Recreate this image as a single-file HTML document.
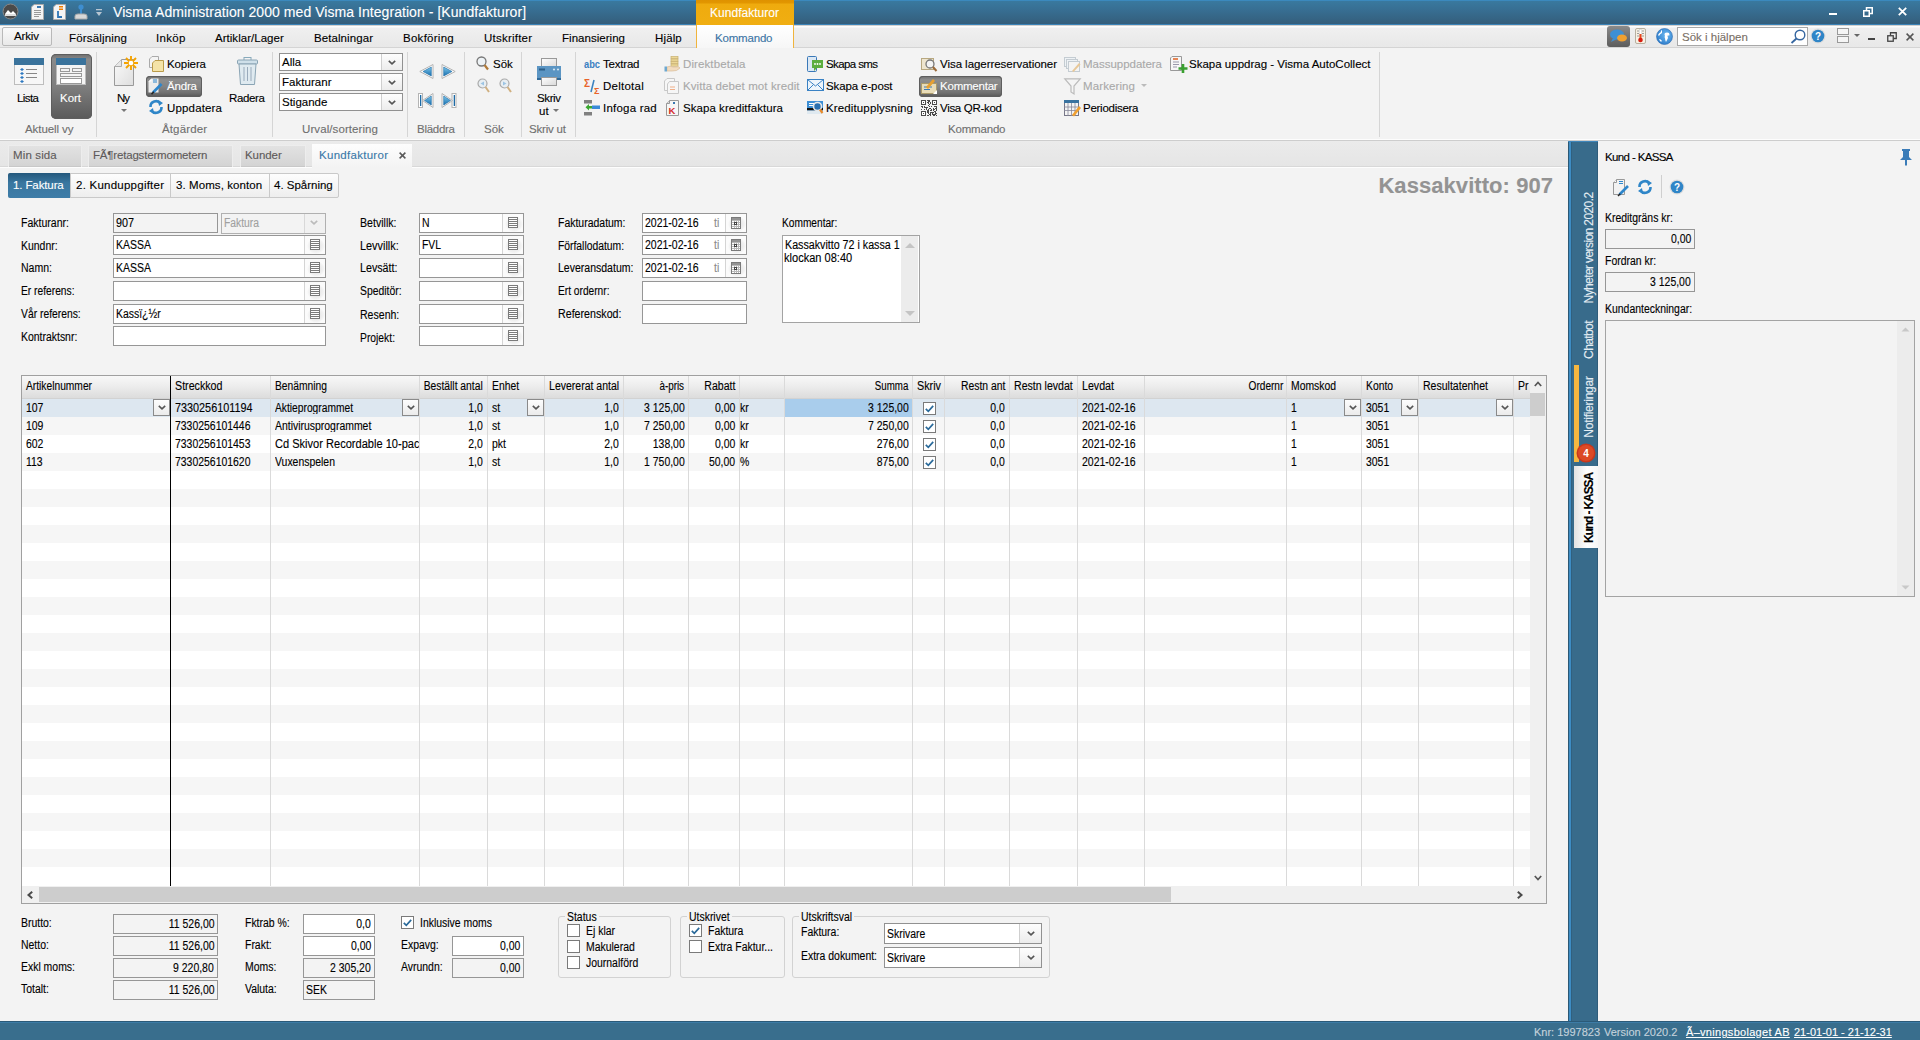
<!DOCTYPE html><html><head><meta charset="utf-8"><style>
*{box-sizing:border-box;margin:0;padding:0}
html,body{width:1920px;height:1040px;overflow:hidden;background:#f3f3f3;font-family:"Liberation Sans",sans-serif;font-size:12px;color:#000}
.a{position:absolute;white-space:nowrap;line-height:1;-webkit-text-stroke:0.12px currentColor}
svg{position:absolute;overflow:visible}
</style></head><body>
<div class="a" style="left:0px;top:0px;width:1920px;height:26px;background:linear-gradient(#3b89bd 0,#3b89bd 1px,#39799f 1px,#376c8f 12px,#345e7b 24px,#3a82b6 24px,#3a82b6 25px)"></div>
<div class="a" style="left:0px;top:25px;width:1920px;height:1px;background:#d2d0ce"></div>
<svg style="left:2px;top:3px" width="17" height="17" viewBox="0 0 17 17"><circle cx="8.5" cy="8.5" r="7.5" fill="#4a4a4a" stroke="#888" stroke-width="1"/><path d="M3 11 L6 7 L9 10 L11 8 L14 11 Z" fill="#fff"/><rect x="3" y="11" width="11" height="2" fill="#ddd"/></svg>
<svg style="left:31px;top:4px" width="13" height="16" viewBox="0 0 13 16"><path d="M3 0.5 H12.5 V15.5 H0.5 V3 Z" fill="#f4f4f4" stroke="#aaa"/><rect x="6" y="2" width="4" height="2" fill="#3b79b0"/><path d="M3 6.5h7M3 8.5h7M3 10.5h7M3 12.5h5" stroke="#999" stroke-width="1"/></svg>
<svg style="left:53px;top:4px" width="13" height="16" viewBox="0 0 13 16"><path d="M3 0.5 H12.5 V15.5 H0.5 V3 Z" fill="#f4f4f4" stroke="#aaa"/><rect x="6" y="2" width="4" height="1.5" fill="#f07d00"/><rect x="6" y="4.5" width="4" height="1.5" fill="#f07d00"/><path d="M5 7 V13 H9" stroke="#2e75b6" stroke-width="1.8" fill="none"/></svg>
<svg style="left:74px;top:4px" width="15" height="16" viewBox="0 0 15 16"><circle cx="7" cy="3" r="2.6" fill="#3e8ed0"/><rect x="6" y="4" width="2" height="7" fill="#3e8ed0"/><path d="M1 12 Q1 10 4 10 H10 Q13 10 13 12 V15 H1Z" fill="#d8d8d8" stroke="#aaa"/></svg>
<svg style="left:96px;top:9px" width="6" height="8" viewBox="0 0 6 8"><rect x="0" y="0" width="6" height="1.3" fill="#b8c6d2"/><path d="M0 3 H6 L3 7Z" fill="#b8c6d2"/></svg>
<div class="a" style="left:113px;top:5px;font-size:14px;color:#fff;font-weight:normal;letter-spacing:0.055px;x-ls:0.05px">Visma Administration 2000 med Visma Integration - [Kundfakturor]</div>
<div class="a" style="left:696px;top:0px;width:98px;height:26px;background:linear-gradient(#df9200 0,#e29600 3px,#efab0e 4px,#f0ae12 25px)"></div>
<div class="a" style="left:710px;top:7px;font-size:12px;color:#fff;font-weight:normal;letter-spacing:0.027px;">Kundfakturor</div>
<div class="a" style="left:1829px;top:13px;width:8px;height:2px;background:#fff"></div>
<svg style="left:1863px;top:7px" width="10" height="10" viewBox="0 0 10 10"><rect x="0.75" y="3.75" width="5.5" height="5.5" fill="none" stroke="#fff" stroke-width="1.5"/><path d="M3.5 3.5 V0.75 H9.25 V6.5 H6.5" fill="none" stroke="#fff" stroke-width="1.5"/></svg>
<svg style="left:1898px;top:7px" width="9" height="9" viewBox="0 0 9 9"><path d="M0.8 0.8 L8.2 8.2 M8.2 0.8 L0.8 8.2" stroke="#fff" stroke-width="1.8"/></svg>
<div class="a" style="left:0px;top:26px;width:1920px;height:22px;background:linear-gradient(#fdfdfd 0,#fdfdfd 1px,#f0f0f0 2px,#ececec 50%,#e8e8e8);border-bottom:1px solid #d4d4d4"></div>
<div class="a" style="left:2px;top:27px;width:50px;height:19px;background:linear-gradient(#fafafa,#e9e9e9);border:1px solid #b9b9b9;border-radius:2px"></div>
<div class="a" style="left:14px;top:31px;font-size:11.5px;color:#000;font-weight:normal;letter-spacing:-0.139px;">Arkiv</div>
<div class="a" style="left:69px;top:33px;font-size:11.5px;color:#000;font-weight:normal;letter-spacing:0.176px;">Försäljning</div>
<div class="a" style="left:156px;top:33px;font-size:11.5px;color:#000;font-weight:normal;letter-spacing:0.342px;">Inköp</div>
<div class="a" style="left:215px;top:33px;font-size:11.5px;color:#000;font-weight:normal;letter-spacing:0.028px;">Artiklar/Lager</div>
<div class="a" style="left:314px;top:33px;font-size:11.5px;color:#000;font-weight:normal;letter-spacing:0.082px;">Betalningar</div>
<div class="a" style="left:403px;top:33px;font-size:11.5px;color:#000;font-weight:normal;letter-spacing:0.271px;">Bokföring</div>
<div class="a" style="left:484px;top:33px;font-size:11.5px;color:#000;font-weight:normal;letter-spacing:0.222px;">Utskrifter</div>
<div class="a" style="left:562px;top:33px;font-size:11.5px;color:#000;font-weight:normal;letter-spacing:0.033px;">Finansiering</div>
<div class="a" style="left:655px;top:33px;font-size:11.5px;color:#000;font-weight:normal;letter-spacing:0.136px;">Hjälp</div>
<div class="a" style="left:696px;top:25px;width:98px;height:24px;background:linear-gradient(#ffffff,#f6f6f6);border-left:1px solid #f0b43c;border-right:1px solid #f0b43c"></div>
<div class="a" style="left:715px;top:33px;font-size:11.5px;color:#3b74a4;font-weight:normal;letter-spacing:-0.186px;">Kommando</div>
<div class="a" style="left:1607px;top:26px;width:23px;height:21px;background:linear-gradient(#8a8a8a,#5c5c5c);border-radius:3px"></div>
<svg style="left:1609px;top:28px" width="19" height="17" viewBox="0 0 19 17"><ellipse cx="8" cy="6.5" rx="7" ry="5" fill="#3e8fd3"/><path d="M4 10 L2 14 L8 11Z" fill="#3e8fd3"/><ellipse cx="13" cy="10" rx="5" ry="3.5" fill="#f0a030"/></svg>
<svg style="left:1635px;top:28px" width="11" height="16" viewBox="0 0 11 16"><rect x="0.5" y="0.5" width="10" height="15" rx="1.5" fill="#f7f1e4" stroke="#b8b0a0"/><path d="M2 3h2M7 3h2M2 5.5h2M7 5.5h2M2 8h2M7 8h2" stroke="#888" stroke-width="0.8"/><rect x="4.5" y="1.5" width="2" height="8" fill="#fff" stroke="#ccc" stroke-width="0.5"/><rect x="4.5" y="6" width="2" height="5" fill="#e84a1a"/><circle cx="5.5" cy="12" r="2.3" fill="#d81e10"/></svg>
<svg style="left:1656px;top:28px" width="17" height="17" viewBox="0 0 17 17"><defs><radialGradient id="ggl" cx="0.6" cy="0.4" r="0.7"><stop offset="0" stop-color="#6ab8f0"/><stop offset="1" stop-color="#2a78c8"/></radialGradient></defs><circle cx="8.5" cy="8.5" r="8" fill="url(#ggl)" stroke="#2a6ab0" stroke-width="0.6"/><path d="M6 2 Q4 3 5 4 Q3 5 2 7 L3 8 Q4 6 6 5Z M9 5 Q11 4 13 5 Q14 7 13 8 L12 7 Q11 8 12 10 Q11 12 10 14 Q9 12 9 10 Q8 9 9 8 Q8 6 9 5Z M3 11 Q5 11 6 13 Q5 14 4 13Z" fill="#fff"/></svg>
<div class="a" style="left:1677px;top:27px;width:131px;height:19px;background:#fff;border:1px solid #a8a8a8"></div>
<div class="a" style="left:1682px;top:32px;font-size:11.5px;color:#7a6f66;font-weight:normal;">Sök i hjälpen</div>
<svg style="left:1790px;top:29px" width="16" height="15" viewBox="0 0 16 15"><circle cx="10" cy="6" r="4.8" fill="none" stroke="#3566a0" stroke-width="1.4"/><path d="M6.5 9.5 L1.5 14" stroke="#3566a0" stroke-width="1.8"/></svg>
<svg style="left:1810px;top:28px" width="16" height="16" viewBox="0 0 16 16"><circle cx="8" cy="8" r="7.5" fill="#ddd"/><circle cx="8" cy="8" r="6.3" fill="#2f85c7"/><text x="8" y="12" font-size="10" font-weight="bold" text-anchor="middle" fill="#fff" font-family="Liberation Sans">?</text></svg>
<svg style="left:1837px;top:28px" width="12" height="16" viewBox="0 0 12 16"><rect x="0.5" y="0.5" width="11" height="6" fill="#f5f5f5" stroke="#999"/><rect x="0.5" y="8.5" width="11" height="6" fill="#f5f5f5" stroke="#999"/></svg>
<svg style="left:1854px;top:34px" width="6" height="4" viewBox="0 0 6 4"><path d="M0 0 H6 L3 3Z" fill="#666"/></svg>
<div class="a" style="left:1868px;top:38px;width:7px;height:2px;background:#444"></div>
<svg style="left:1887px;top:32px" width="10" height="10" viewBox="0 0 10 10"><rect x="0.75" y="3.75" width="5.5" height="5.5" fill="none" stroke="#444" stroke-width="1.3"/><path d="M3.5 3.5 V0.75 H9.25 V6.5 H6.5" fill="none" stroke="#444" stroke-width="1.3"/></svg>
<svg style="left:1906px;top:33px" width="8" height="8" viewBox="0 0 8 8"><path d="M0.6 0.6 L7.4 7.4 M7.4 0.6 L0.6 7.4" stroke="#555" stroke-width="1.5"/></svg>
<div class="a" style="left:0px;top:48px;width:1920px;height:92px;background:#f3f3f3"></div>
<div class="a" style="left:0px;top:139px;width:1920px;height:1px;background:#fdfdfd"></div>
<div class="a" style="left:0px;top:140px;width:1920px;height:1px;background:#cdcdcd"></div>
<div class="a" style="left:96px;top:52px;width:1px;height:85px;background:#d5d5d5"></div>
<div class="a" style="left:272px;top:52px;width:1px;height:85px;background:#d5d5d5"></div>
<div class="a" style="left:407px;top:52px;width:1px;height:85px;background:#d5d5d5"></div>
<div class="a" style="left:464px;top:52px;width:1px;height:85px;background:#d5d5d5"></div>
<div class="a" style="left:521px;top:52px;width:1px;height:85px;background:#d5d5d5"></div>
<div class="a" style="left:575px;top:52px;width:1px;height:85px;background:#d5d5d5"></div>
<div class="a" style="left:1379px;top:52px;width:1px;height:85px;background:#d5d5d5"></div>
<div class="a" style="left:25px;top:124px;font-size:11.5px;color:#6f6f6f;font-weight:normal;letter-spacing:-0.079px;">Aktuell vy</div>
<div class="a" style="left:162px;top:124px;font-size:11.5px;color:#6f6f6f;font-weight:normal;letter-spacing:0.128px;">Åtgärder</div>
<div class="a" style="left:302px;top:124px;font-size:11.5px;color:#6f6f6f;font-weight:normal;letter-spacing:0.088px;">Urval/sortering</div>
<div class="a" style="left:417px;top:124px;font-size:11.5px;color:#6f6f6f;font-weight:normal;letter-spacing:-0.273px;">Bläddra</div>
<div class="a" style="left:484px;top:124px;font-size:11.5px;color:#6f6f6f;font-weight:normal;">Sök</div>
<div class="a" style="left:529px;top:124px;font-size:11.5px;color:#6f6f6f;font-weight:normal;letter-spacing:-0.191px;">Skriv ut</div>
<div class="a" style="left:948px;top:124px;font-size:11.5px;color:#6f6f6f;font-weight:normal;letter-spacing:-0.186px;">Kommando</div>
<svg style="left:14px;top:58px" width="30" height="27" viewBox="0 0 30 27"><rect x="0.5" y="0.5" width="29" height="26" fill="#f7f7f7" stroke="#bdbdbd"/><rect x="0" y="0" width="30" height="7" fill="#3a739c"/><g fill="#2d78c0"><path d="M8 10l2 1.5-2 1.5-2-1.5z"/><path d="M8 14l2 1.5-2 1.5-2-1.5z"/><path d="M8 18l2 1.5-2 1.5-2-1.5z"/><path d="M8 22l2 1.5-2 1.5-2-1.5z"/></g><path d="M12 11.5h11M12 15.5h11M12 19.5h11" stroke="#888" stroke-width="1"/></svg>
<div class="a" style="left:17px;top:93px;font-size:11.5px;color:#000;font-weight:normal;letter-spacing:-0.573px;">Lista</div>
<div class="a" style="left:51px;top:54px;width:41px;height:65px;background:linear-gradient(#6c6c6c 0,#8a8a8a 8%,#7e7e7e 50%,#5a5a5a 100%);border-radius:5px;box-shadow:inset 0 0 0 1px #5e5e5e"></div>
<svg style="left:56px;top:58px" width="30" height="28" viewBox="0 0 30 28"><rect x="0.5" y="0.5" width="29" height="26" fill="#f4f4f4" stroke="#bbb"/><rect x="0" y="0" width="30" height="7" fill="#3a739c"/><rect x="4.5" y="10.5" width="9" height="3" fill="none" stroke="#999"/><rect x="16.5" y="10.5" width="9" height="3" fill="none" stroke="#999"/><rect x="4.5" y="15.5" width="21" height="3" fill="none" stroke="#999"/><rect x="4.5" y="20.5" width="21" height="5" fill="#fff" stroke="#999"/></svg>
<div class="a" style="left:60px;top:93px;font-size:11.5px;color:#fff;font-weight:normal;letter-spacing:-0.030px;">Kort</div>
<svg style="left:113px;top:56px" width="27" height="32" viewBox="0 0 27 32"><defs><linearGradient id="gny" x1="0" y1="0" x2="1" y2="1"><stop offset="0" stop-color="#fafafa"/><stop offset="1" stop-color="#dedede"/></linearGradient></defs><path d="M8.5 3.5 H20.5 V29.5 H1.5 V10.5 Z" fill="url(#gny)" stroke="#9a9a9a"/><path d="M1.5 10.5 H8.5 V3.5" fill="#e6e6e6" stroke="#aaa"/><g stroke="#f5a300" stroke-width="1.9"><path d="M18 0 V14 M11 7 H25 M13 2 L23 12 M23 2 L13 12"/></g><circle cx="18" cy="7" r="2.3" fill="#fff"/></svg>
<div class="a" style="left:117px;top:93px;font-size:11.5px;color:#000;font-weight:normal;letter-spacing:-1.055px;">Ny</div>
<svg style="left:121px;top:109px" width="6" height="4" viewBox="0 0 6 4"><path d="M0 0H6L3 3Z" fill="#777"/></svg>
<svg style="left:149px;top:56px" width="15" height="16" viewBox="0 0 15 16"><path d="M3 0.5H9.5V11.5H0.5V3Z" fill="#f4f4f4" stroke="#aaa"/><path d="M6 4.5H14.5V15.5H3.5V7Z" fill="#f4e3a8" stroke="#b99a4a"/></svg>
<div class="a" style="left:167px;top:59px;font-size:11.5px;color:#000;font-weight:normal;letter-spacing:-0.106px;">Kopiera</div>
<div class="a" style="left:146px;top:76px;width:56px;height:21px;background:linear-gradient(#6c6c6c 0,#8d8d8d 18%,#848484 50%,#707070 80%,#565656 100%);border-radius:4px;box-shadow:inset 0 0 0 1px #5e5e5e"></div>
<svg style="left:148px;top:78px" width="16" height="17" viewBox="0 0 16 17"><path d="M3.5 0.5 H10.5 V14.5 H0.5 V3.5Z" fill="#ececec"/><path d="M0.5 3.5 H3.5 V0.5Z" fill="#fff"/><path d="M5 2h4M5 4h4" stroke="#2d86cc" stroke-width="1.2"/><path d="M13.5 6 L5 14.5" stroke="#2d86cc" stroke-width="2.6"/><path d="M5.8 13.7 L3.5 16.2" stroke="#222" stroke-width="1.5"/></svg>
<div class="a" style="left:167px;top:81px;font-size:11.5px;color:#fff;font-weight:normal;letter-spacing:-0.171px;">Ändra</div>
<svg style="left:148px;top:99px" width="16" height="16" viewBox="0 0 16 16"><path d="M2.5 8 A5.5 5.5 0 0 1 12.5 4.5" fill="none" stroke="#2f86c8" stroke-width="2.6"/><path d="M13.5 8 A5.5 5.5 0 0 1 3.5 11.5" fill="none" stroke="#2f86c8" stroke-width="2.6"/><path d="M10 1 L15 4 L11 7Z M6 15 L1 12 L5 9Z" fill="#2f86c8"/></svg>
<div class="a" style="left:167px;top:103px;font-size:11.5px;color:#000;font-weight:normal;letter-spacing:0.163px;">Uppdatera</div>
<svg style="left:237px;top:57px" width="21" height="28" viewBox="0 0 21 28"><rect x="7" y="0.5" width="7" height="3" fill="none" stroke="#8ab"/><rect x="0.5" y="3" width="20" height="4" rx="1" fill="#cfe0ea" stroke="#8aa4b4"/><path d="M2 7 H19 L17.5 27.5 H3.5Z" fill="#dfeaf0" stroke="#8aa4b4"/><path d="M7 10V24M10.5 10V24M14 10V24" stroke="#9ab"/></svg>
<div class="a" style="left:229px;top:93px;font-size:11.5px;color:#000;font-weight:normal;letter-spacing:-0.343px;">Radera</div>
<div class="a" style="left:279px;top:53px;width:124px;height:18px;background:#fff;border:1px solid #919191"></div>
<div class="a" style="left:381px;top:54px;width:21px;height:16px;background:linear-gradient(#fdfdfd,#ececec);border-left:1px solid #cfcfcf"></div>
<svg style="left:388.0px;top:59.5px" width="8" height="5" viewBox="0 0 8 5"><path d="M0.8 0.8 L4 3.8 L7.2 0.8" fill="none" stroke="#555" stroke-width="1.6"/></svg>
<div class="a" style="left:282px;top:57px;font-size:11.5px;color:#000;font-weight:normal;">Alla</div>
<div class="a" style="left:279px;top:73px;width:124px;height:18px;background:#fff;border:1px solid #919191"></div>
<div class="a" style="left:381px;top:74px;width:21px;height:16px;background:linear-gradient(#fdfdfd,#ececec);border-left:1px solid #cfcfcf"></div>
<svg style="left:388.0px;top:79.5px" width="8" height="5" viewBox="0 0 8 5"><path d="M0.8 0.8 L4 3.8 L7.2 0.8" fill="none" stroke="#555" stroke-width="1.6"/></svg>
<div class="a" style="left:282px;top:77px;font-size:11.5px;color:#000;font-weight:normal;letter-spacing:0.037px;">Fakturanr</div>
<div class="a" style="left:279px;top:93px;width:124px;height:18px;background:#fff;border:1px solid #919191"></div>
<div class="a" style="left:381px;top:94px;width:21px;height:16px;background:linear-gradient(#fdfdfd,#ececec);border-left:1px solid #cfcfcf"></div>
<svg style="left:388.0px;top:99.5px" width="8" height="5" viewBox="0 0 8 5"><path d="M0.8 0.8 L4 3.8 L7.2 0.8" fill="none" stroke="#555" stroke-width="1.6"/></svg>
<div class="a" style="left:282px;top:97px;font-size:11.5px;color:#000;font-weight:normal;">Stigande</div>
<svg style="left:419px;top:64px" width="15" height="15" viewBox="0 0 15 15"><defs><linearGradient id="ga1" x1="0" y1="0" x2="0" y2="1"><stop offset="0" stop-color="#7cc8ec"/><stop offset="1" stop-color="#1a6fae"/></linearGradient></defs><path d="M14 0.5 V14.5 L0.8 7.5Z" fill="#fff" stroke="#b4b4b4"/><path d="M12.3 3 V12 L4 7.5Z" fill="url(#ga1)" stroke="#1d6aa5" stroke-width="0.6"/></svg>
<svg style="left:441px;top:64px" width="15" height="15" viewBox="0 0 15 15"><defs><linearGradient id="ga2" x1="0" y1="0" x2="0" y2="1"><stop offset="0" stop-color="#7cc8ec"/><stop offset="1" stop-color="#1a6fae"/></linearGradient></defs><path d="M1 0.5 V14.5 L14.2 7.5Z" fill="#fff" stroke="#b4b4b4"/><path d="M2.7 3 V12 L11 7.5Z" fill="url(#ga2)" stroke="#1d6aa5" stroke-width="0.6"/></svg>
<svg style="left:418px;top:93px" width="16" height="15" viewBox="0 0 16 15"><defs><linearGradient id="ga3" x1="0" y1="0" x2="0" y2="1"><stop offset="0" stop-color="#7cc8ec"/><stop offset="1" stop-color="#1a6fae"/></linearGradient></defs><rect x="0.5" y="0.5" width="4" height="14" fill="#fff" stroke="#b4b4b4"/><rect x="2" y="2" width="1.3" height="11" fill="#1d6aa5"/><path d="M15 0.5 V14.5 L4.5 7.5Z" fill="#fff" stroke="#b4b4b4"/><path d="M13.3 3 V12 L6.5 7.5Z" fill="url(#ga3)" stroke="#1d6aa5" stroke-width="0.6"/></svg>
<svg style="left:441px;top:93px" width="16" height="15" viewBox="0 0 16 15"><defs><linearGradient id="ga4" x1="0" y1="0" x2="0" y2="1"><stop offset="0" stop-color="#7cc8ec"/><stop offset="1" stop-color="#1a6fae"/></linearGradient></defs><rect x="11" y="0.5" width="4" height="14" fill="#fff" stroke="#b4b4b4"/><rect x="12.7" y="2" width="1.3" height="11" fill="#1d6aa5"/><path d="M1 0.5 V14.5 L11.5 7.5Z" fill="#fff" stroke="#b4b4b4"/><path d="M2.7 3 V12 L9.5 7.5Z" fill="url(#ga4)" stroke="#1d6aa5" stroke-width="0.6"/></svg>
<svg style="left:476px;top:56px" width="13" height="15" viewBox="0 0 13 15"><circle cx="5.5" cy="5.5" r="4.5" fill="#eef3f6" stroke="#777" stroke-width="1.3"/><path d="M8.5 9 L12 13.5" stroke="#b07a3a" stroke-width="2.2"/></svg>
<div class="a" style="left:493px;top:59px;font-size:11.5px;color:#000;font-weight:normal;">Sök</div>
<svg style="left:477px;top:78px" width="13" height="16" viewBox="0 0 13 16"><circle cx="5.5" cy="5.5" r="4.5" fill="#e8eef2" stroke="#aaa" stroke-width="1.2"/><path d="M7 3.5 L3.5 5.5 L7 7.5Z" fill="#9cc4e4"/><path d="M8.5 9 L12 14" stroke="#d0b080" stroke-width="2"/></svg>
<svg style="left:499px;top:78px" width="13" height="16" viewBox="0 0 13 16"><circle cx="5.5" cy="5.5" r="4.5" fill="#e8eef2" stroke="#aaa" stroke-width="1.2"/><path d="M4 3.5 L7.5 5.5 L4 7.5Z" fill="#9cc4e4"/><path d="M8.5 9 L12 14" stroke="#d0b080" stroke-width="2"/></svg>
<svg style="left:537px;top:58px" width="25" height="29" viewBox="0 0 25 29"><defs><linearGradient id="gpp" x1="0" y1="0" x2="1" y2="1"><stop offset="0" stop-color="#fff"/><stop offset="1" stop-color="#d8d8d8"/></linearGradient></defs><rect x="4.5" y="0.5" width="15" height="9" fill="url(#gpp)" stroke="#999"/><rect x="0" y="8" width="24" height="14" fill="#5b95c3"/><rect x="0" y="20" width="24" height="2" fill="#2f6a99"/><rect x="2" y="10.5" width="6" height="2" fill="#2d5f88"/><circle cx="17" cy="11.5" r="1.1" fill="#cfe2f0"/><circle cx="21" cy="11.5" r="1.1" fill="#cfe2f0"/><rect x="4.5" y="19.5" width="15" height="8" fill="url(#gpp)" stroke="#999"/></svg>
<div class="a" style="left:537px;top:93px;font-size:11.5px;color:#000;font-weight:normal;letter-spacing:-0.389px;">Skriv</div>
<div class="a" style="left:539px;top:106px;font-size:11.5px;color:#000;font-weight:normal;">ut</div>
<svg style="left:553px;top:109px" width="6" height="4" viewBox="0 0 6 4"><path d="M0 0H6L3 3Z" fill="#777"/></svg>
<svg style="left:584px;top:58px" width="17" height="11" viewBox="0 0 17 11"><text x="0" y="9.5" font-size="11" font-weight="bold" fill="#3a80c2" font-family="Liberation Sans" textLength="16" lengthAdjust="spacingAndGlyphs">abc</text></svg>
<div class="a" style="left:603px;top:59px;font-size:11.5px;color:#000;font-weight:normal;letter-spacing:-0.202px;">Textrad</div>
<svg style="left:584px;top:78px" width="17" height="16" viewBox="0 0 17 16"><text x="0" y="8.5" font-size="10" font-weight="bold" fill="#e8632a" font-family="Liberation Sans">Σ</text><path d="M10 2 L7 14" stroke="#3a82c0" stroke-width="1.6"/><text x="10" y="15.5" font-size="9" font-weight="bold" fill="#e8632a" font-family="Liberation Sans">Σ</text></svg>
<div class="a" style="left:603px;top:81px;font-size:11.5px;color:#000;font-weight:normal;letter-spacing:0.251px;">Deltotal</div>
<svg style="left:584px;top:99px" width="17" height="17" viewBox="0 0 17 17"><rect x="0" y="1" width="8" height="3.5" fill="#808080"/><rect x="0" y="13" width="8" height="3.5" fill="#808080"/><rect x="8" y="6.5" width="8" height="3.5" fill="#3a8ad8"/><path d="M1.5 8.25 L5 5 V7 H8 V9.5 H5 V11.5Z" fill="#3aa830"/></svg>
<div class="a" style="left:603px;top:103px;font-size:11.5px;color:#000;font-weight:normal;letter-spacing:0.218px;">Infoga rad</div>
<svg style="left:664px;top:56px" width="17" height="16" viewBox="0 0 17 16"><g fill="#ecd796" stroke="#c8b070" stroke-width="0.7"><rect x="7" y="0.5" width="7" height="2.2"/><rect x="7" y="3" width="7" height="2.2"/><rect x="7" y="5.5" width="7" height="2.2"/><rect x="7" y="8" width="7" height="2.2"/></g><path d="M3 11 Q6 9.5 9 11 H12 Q15 10 16 12 Q13 15.5 8 15 H3Z" fill="#f2dcc0" stroke="#d8bc98" stroke-width="0.7"/><rect x="0.5" y="10.5" width="2.5" height="5" fill="#6ea8d0"/></svg>
<div class="a" style="left:683px;top:59px;font-size:11.5px;color:#a9a9a9;font-weight:normal;letter-spacing:0.104px;">Direktbetala</div>
<svg style="left:664px;top:78px" width="15" height="16" viewBox="0 0 15 16"><path d="M3 0.5H10.5V12.5H0.5V3Z" fill="#f6f6f6" stroke="#c8c8c8"/><path d="M5.5 3.5H14.5V15.5H3.5V6Z" fill="#f6f6f6" stroke="#c8c8c8"/><path d="M6 9h5M6 11.5h5" stroke="#f0b08a"/></svg>
<div class="a" style="left:683px;top:81px;font-size:11.5px;color:#a9a9a9;font-weight:normal;letter-spacing:0.095px;">Kvitta debet mot kredit</div>
<svg style="left:666px;top:100px" width="13" height="16" viewBox="0 0 13 16"><path d="M3.5 0.5H12.5V15.5H0.5V3.5Z" fill="#f6f6f6" stroke="#999"/><path d="M0.5 3.5H3.5V0.5" fill="#ddd" stroke="#999"/><rect x="7" y="2" width="2" height="2" fill="#3a78b0"/><text x="2.5" y="14" font-size="9.5" font-weight="bold" fill="#d42a2a" font-family="Liberation Sans">K</text></svg>
<div class="a" style="left:683px;top:103px;font-size:11.5px;color:#000;font-weight:normal;letter-spacing:0.051px;">Skapa kreditfaktura</div>
<svg style="left:807px;top:56px" width="17" height="17" viewBox="0 0 17 17"><rect x="0.5" y="0.5" width="9" height="15" rx="1" fill="#dbe8f4" stroke="#3a78b8"/><rect x="5" y="4" width="11" height="8" fill="#5cae3e"/><path d="M7 12 L7 15 L10 12Z" fill="#5cae3e"/><circle cx="8" cy="8" r="0.9" fill="#fff"/><circle cx="10.5" cy="8" r="0.9" fill="#fff"/><circle cx="13" cy="8" r="0.9" fill="#fff"/></svg>
<div class="a" style="left:826px;top:59px;font-size:11.5px;color:#000;font-weight:normal;letter-spacing:-0.610px;">Skapa sms</div>
<svg style="left:807px;top:79px" width="17" height="12" viewBox="0 0 17 12"><rect x="0.5" y="0.5" width="16" height="11" fill="#eef5fb" stroke="#3a82c4"/><path d="M0.5 0.5 L8.5 7 L16.5 0.5 M0.5 11.5 L6 6 M16.5 11.5 L11 6" fill="none" stroke="#3a82c4"/></svg>
<div class="a" style="left:826px;top:81px;font-size:11.5px;color:#000;font-weight:normal;letter-spacing:-0.115px;">Skapa e-post</div>
<svg style="left:807px;top:100px" width="17" height="17" viewBox="0 0 17 17"><rect x="0" y="1" width="16" height="13" fill="#3d8ed4"/><rect x="0" y="8" width="16" height="2.5" fill="#111"/><rect x="0" y="10.5" width="16" height="3.5" fill="#dfe9f0"/><path d="M2 3.5h5M2 5.5h4" stroke="#fff" stroke-width="1"/><circle cx="10.5" cy="6.5" r="4" fill="#2a6fb0" stroke="#e8e8e8" stroke-width="1.6"/><path d="M13 9.5 L15.5 13" stroke="#e88a2a" stroke-width="2.2"/></svg>
<div class="a" style="left:826px;top:103px;font-size:11.5px;color:#000;font-weight:normal;letter-spacing:0.132px;">Kreditupplysning</div>
<svg style="left:921px;top:56px" width="17" height="16" viewBox="0 0 17 16"><rect x="0.5" y="2.5" width="12" height="11" fill="#efe6cf" stroke="#b8a880"/><circle cx="9" cy="8" r="4" fill="#f4f4f4" stroke="#777" stroke-width="1.3"/><path d="M12 11 L15.5 15" stroke="#9a6a3a" stroke-width="2"/></svg>
<div class="a" style="left:940px;top:59px;font-size:11.5px;color:#000;font-weight:normal;letter-spacing:-0.047px;">Visa lagerreservationer</div>
<div class="a" style="left:919px;top:76px;width:83px;height:21px;background:linear-gradient(#6c6c6c 0,#8d8d8d 18%,#848484 50%,#707070 80%,#565656 100%);border-radius:4px;box-shadow:inset 0 0 0 1px #5e5e5e"></div>
<svg style="left:921px;top:78px" width="17" height="17" viewBox="0 0 17 17"><rect x="0.5" y="5.5" width="15" height="10" fill="#e8dcb8" stroke="#aa9a6a"/><path d="M3 9h8M3 11.5h6" stroke="#3a7ab8"/><path d="M5 9 L12 1 L14 3 L7 11Z" fill="#e8a030"/><path d="M12 16 L16 12 V16Z" fill="#fff"/></svg>
<div class="a" style="left:940px;top:81px;font-size:11.5px;color:#fff;font-weight:normal;letter-spacing:-0.217px;">Kommentar</div>
<svg style="left:921px;top:100px" width="16" height="16" viewBox="0 0 16 16"><g fill="#4a4a4a"><rect x="0" y="0" width="5" height="5"/><rect x="11" y="0" width="5" height="5"/><rect x="0" y="11" width="5" height="5"/></g><g fill="#fff"><rect x="1" y="1" width="3" height="3"/><rect x="12" y="1" width="3" height="3"/><rect x="1" y="12" width="3" height="3"/></g><g fill="#4a4a4a"><rect x="2" y="2" width="1" height="1"/><rect x="13" y="2" width="1" height="1"/><rect x="2" y="13" width="1" height="1"/><rect x="6" y="0" width="1" height="1"/><rect x="7" y="0" width="1" height="1"/><rect x="8" y="0" width="1" height="1"/><rect x="7" y="1" width="1" height="1"/><rect x="8" y="1" width="1" height="1"/><rect x="6" y="2" width="1" height="1"/><rect x="7" y="2" width="1" height="1"/><rect x="9" y="2" width="1" height="1"/><rect x="7" y="3" width="1" height="1"/><rect x="9" y="3" width="1" height="1"/><rect x="8" y="4" width="1" height="1"/><rect x="7" y="5" width="1" height="1"/><rect x="0" y="6" width="1" height="1"/><rect x="1" y="6" width="1" height="1"/><rect x="3" y="6" width="1" height="1"/><rect x="8" y="6" width="1" height="1"/><rect x="10" y="6" width="1" height="1"/><rect x="13" y="6" width="1" height="1"/><rect x="14" y="6" width="1" height="1"/><rect x="15" y="6" width="1" height="1"/><rect x="1" y="7" width="1" height="1"/><rect x="3" y="7" width="1" height="1"/><rect x="4" y="7" width="1" height="1"/><rect x="5" y="7" width="1" height="1"/><rect x="6" y="7" width="1" height="1"/><rect x="15" y="7" width="1" height="1"/><rect x="5" y="8" width="1" height="1"/><rect x="8" y="8" width="1" height="1"/><rect x="9" y="8" width="1" height="1"/><rect x="12" y="8" width="1" height="1"/><rect x="14" y="8" width="1" height="1"/><rect x="15" y="8" width="1" height="1"/><rect x="0" y="9" width="1" height="1"/><rect x="3" y="9" width="1" height="1"/><rect x="5" y="9" width="1" height="1"/><rect x="7" y="9" width="1" height="1"/><rect x="10" y="9" width="1" height="1"/><rect x="12" y="9" width="1" height="1"/><rect x="13" y="9" width="1" height="1"/><rect x="15" y="9" width="1" height="1"/><rect x="6" y="10" width="1" height="1"/><rect x="7" y="10" width="1" height="1"/><rect x="9" y="10" width="1" height="1"/><rect x="10" y="10" width="1" height="1"/><rect x="12" y="10" width="1" height="1"/><rect x="15" y="10" width="1" height="1"/><rect x="6" y="11" width="1" height="1"/><rect x="7" y="11" width="1" height="1"/><rect x="13" y="11" width="1" height="1"/><rect x="14" y="11" width="1" height="1"/><rect x="6" y="12" width="1" height="1"/><rect x="7" y="12" width="1" height="1"/><rect x="9" y="12" width="1" height="1"/><rect x="10" y="12" width="1" height="1"/><rect x="11" y="12" width="1" height="1"/><rect x="12" y="12" width="1" height="1"/><rect x="14" y="12" width="1" height="1"/><rect x="7" y="13" width="1" height="1"/><rect x="9" y="13" width="1" height="1"/><rect x="11" y="13" width="1" height="1"/><rect x="14" y="13" width="1" height="1"/><rect x="15" y="13" width="1" height="1"/><rect x="8" y="14" width="1" height="1"/><rect x="9" y="14" width="1" height="1"/><rect x="11" y="14" width="1" height="1"/><rect x="12" y="14" width="1" height="1"/><rect x="13" y="14" width="1" height="1"/><rect x="14" y="14" width="1" height="1"/><rect x="6" y="15" width="1" height="1"/><rect x="7" y="15" width="1" height="1"/><rect x="9" y="15" width="1" height="1"/><rect x="12" y="15" width="1" height="1"/><rect x="13" y="15" width="1" height="1"/><rect x="15" y="15" width="1" height="1"/></g></svg>
<div class="a" style="left:940px;top:103px;font-size:11.5px;color:#000;font-weight:normal;letter-spacing:-0.298px;">Visa QR-kod</div>
<svg style="left:1064px;top:57px" width="17" height="16" viewBox="0 0 17 16"><rect x="0.5" y="0.5" width="11" height="9" fill="#eef2f5" stroke="#c4ccd2"/><rect x="2.5" y="2.5" width="11" height="9" fill="#eef2f5" stroke="#c4ccd2"/><rect x="4.5" y="4.5" width="11" height="10" fill="#f4f4f4" stroke="#c4ccd2"/><path d="M8 14 L15 6 L16.5 7.5 L9.5 15Z" fill="#e8c898"/></svg>
<div class="a" style="left:1083px;top:59px;font-size:11.5px;color:#a9a9a9;font-weight:normal;letter-spacing:-0.022px;">Massuppdatera</div>
<svg style="left:1064px;top:78px" width="17" height="17" viewBox="0 0 17 17"><path d="M0.8 0.8 H16.2 L10 8 V16 L7 14 V8Z" fill="#f4f4f4" stroke="#bbb" stroke-width="1.2"/></svg>
<div class="a" style="left:1083px;top:81px;font-size:11.5px;color:#a9a9a9;font-weight:normal;letter-spacing:0.110px;">Markering</div>
<svg style="left:1141px;top:84px" width="6" height="4" viewBox="0 0 6 4"><path d="M0 0H6L3 3Z" fill="#bbb"/></svg>
<svg style="left:1064px;top:100px" width="17" height="17" viewBox="0 0 17 17"><rect x="0.5" y="0.5" width="14" height="15" fill="#f4f4f4" stroke="#778"/><rect x="0" y="0" width="15" height="3" fill="#3a73a0"/><path d="M0 7h15M0 10.5h15M4 3v13M7.5 3v13M11 3v13" stroke="#889" stroke-width="0.8"/><path d="M8 15 L15 6 L17 8 L10 16.5Z" fill="#f0a030"/></svg>
<div class="a" style="left:1083px;top:103px;font-size:11.5px;color:#000;font-weight:normal;letter-spacing:-0.266px;">Periodisera</div>
<svg style="left:1170px;top:56px" width="17" height="17" viewBox="0 0 17 17"><path d="M2 0.5H11.5V14.5H0.5V2Z" fill="#f6f6f6" stroke="#999"/><path d="M3 3h5" stroke="#e06020" stroke-width="1.5"/><path d="M3 6h6M3 8.5h6M3 11h4" stroke="#99a"/><path d="M13 8 V17 M8.5 12.5 H17.5" stroke="#3aa030" stroke-width="2.6"/></svg>
<div class="a" style="left:1189px;top:59px;font-size:11.5px;color:#000;font-weight:normal;letter-spacing:0.005px;x-ls:-0.25px">Skapa uppdrag - Visma AutoCollect</div>
<div class="a" style="left:0px;top:141px;width:1568px;height:26px;background:linear-gradient(#ebebeb,#e5e5e5)"></div>
<div class="a" style="left:0px;top:166px;width:1568px;height:1px;background:#d8d8d8"></div>
<div class="a" style="left:0px;top:167px;width:1568px;height:1px;background:#fdfdfd"></div>
<div class="a" style="left:8px;top:145px;width:74px;height:22px;background:linear-gradient(#e2e2e2,#d3d3d3);border:1px solid #ededed;border-bottom:none;box-shadow:inset 0 -1px 0 #c8c8c8"></div>
<div class="a" style="left:13px;top:150px;font-size:11.5px;color:#5e5a5a;font-weight:normal;letter-spacing:0.133px;">Min sida</div>
<div class="a" style="left:88px;top:145px;width:145px;height:22px;background:linear-gradient(#e2e2e2,#d3d3d3);border:1px solid #ededed;border-bottom:none;box-shadow:inset 0 -1px 0 #c8c8c8"></div>
<div class="a" style="left:93px;top:150px;font-size:11.5px;color:#5e5a5a;font-weight:normal;letter-spacing:-0.185px;">FÃ¶retagstermometern</div>
<div class="a" style="left:240px;top:145px;width:66px;height:22px;background:linear-gradient(#e2e2e2,#d3d3d3);border:1px solid #ededed;border-bottom:none;box-shadow:inset 0 -1px 0 #c8c8c8"></div>
<div class="a" style="left:245px;top:150px;font-size:11.5px;color:#5e5a5a;font-weight:normal;letter-spacing:-0.066px;">Kunder</div>
<div class="a" style="left:312px;top:144px;width:100px;height:24px;background:linear-gradient(#fdfdfd,#f3f3f3)"></div>
<div class="a" style="left:319px;top:150px;font-size:11.5px;color:#3a78a8;font-weight:normal;letter-spacing:0.287px;">Kundfakturor</div>
<svg style="left:399px;top:152px" width="7" height="7" viewBox="0 0 7 7"><path d="M0.6 0.6 L6.4 6.4 M6.4 0.6 L0.6 6.4" stroke="#5a5a5a" stroke-width="1.5"/></svg>
<div class="a" style="left:8px;top:173px;width:331px;height:25px;background:linear-gradient(#fdfdfd,#eeeeee);border:1px solid #c9c9c9;border-radius:2px"></div>
<div class="a" style="left:8px;top:173px;width:62px;height:25px;background:linear-gradient(#24587c,#3a77a0 40%,#3e7da8);border-radius:2px 0 0 2px"></div>
<div class="a" style="left:13px;top:180px;font-size:11.5px;color:#fff;font-weight:normal;letter-spacing:-0.113px;">1. Faktura</div>
<div class="a" style="left:70px;top:174px;width:1px;height:23px;background:#c9c9c9"></div>
<div class="a" style="left:76px;top:180px;font-size:11.5px;color:#000;font-weight:normal;letter-spacing:0.241px;">2. Kunduppgifter</div>
<div class="a" style="left:170px;top:174px;width:1px;height:23px;background:#c9c9c9"></div>
<div class="a" style="left:176px;top:180px;font-size:11.5px;color:#000;font-weight:normal;letter-spacing:0.089px;">3. Moms, konton</div>
<div class="a" style="left:269px;top:174px;width:1px;height:23px;background:#c9c9c9"></div>
<div class="a" style="left:274px;top:180px;font-size:11.5px;color:#000;font-weight:normal;letter-spacing:-0.007px;">4. Spårning</div>
<div class="a" style="right:367px;top:175px;font-size:22px;color:#939393;font-weight:bold;text-align:right;letter-spacing:0.065px;margin-right:-0.065px;">Kassakvitto: 907</div>
<div class="a" style="left:21px;top:217px;font-size:12px;color:#000;font-weight:normal;transform:scaleX(0.8778);transform-origin:0 0;">Fakturanr:</div>
<div class="a" style="left:21px;top:240px;font-size:12px;color:#000;font-weight:normal;transform:scaleX(0.8709);transform-origin:0 0;">Kundnr:</div>
<div class="a" style="left:21px;top:262px;font-size:12px;color:#000;font-weight:normal;transform:scaleX(0.8771);transform-origin:0 0;">Namn:</div>
<div class="a" style="left:21px;top:285px;font-size:12px;color:#000;font-weight:normal;transform:scaleX(0.8535);transform-origin:0 0;">Er referens:</div>
<div class="a" style="left:21px;top:308px;font-size:12px;color:#000;font-weight:normal;transform:scaleX(0.8607);transform-origin:0 0;">Vår referens:</div>
<div class="a" style="left:21px;top:331px;font-size:12px;color:#000;font-weight:normal;transform:scaleX(0.8703);transform-origin:0 0;">Kontraktsnr:</div>
<div class="a" style="left:113px;top:213px;width:105px;height:20px;background:#f3f3f3;border:1px solid #969696"></div>
<div class="a" style="left:116px;top:217px;font-size:12px;color:#000;font-weight:normal;transform:scaleX(0.8991);transform-origin:0 0;">907</div>
<div class="a" style="left:221px;top:213px;width:105px;height:21px;background:#f3f3f3;border:1px solid #b0b0b0"></div>
<div class="a" style="left:304px;top:214px;width:21px;height:19px;background:#f1f1f1;border-left:1px solid #d8d8d8"></div>
<svg style="left:310px;top:220px" width="8" height="5" viewBox="0 0 8 5"><path d="M0.8 0.8 L4 3.8 L7.2 0.8" fill="none" stroke="#bbb" stroke-width="1.6"/></svg>
<div class="a" style="left:224px;top:217px;font-size:12px;color:#a0a0a0;font-weight:normal;transform:scaleX(0.8604);transform-origin:0 0;">Faktura</div>
<div class="a" style="left:113px;top:235px;width:213px;height:20px;background:#fff;border:1px solid #969696"></div>
<div class="a" style="left:116px;top:239px;font-size:12px;color:#000;font-weight:normal;transform:scaleX(0.8745);transform-origin:0 0;">KASSA</div>
<div class="a" style="left:304px;top:236px;width:21px;height:18px;background:radial-gradient(ellipse 9px 8px at 11px 10px,#dedede,#f2f2f2 80%,#fbfbfb);border-left:1px solid #d4d4d4"></div>
<svg style="left:310px;top:239px" width="10" height="11" viewBox="0 0 10 11"><rect x="0.5" y="0.5" width="9" height="10" fill="#fff" stroke="#7b7b7b"/><path d="M1 2.5h8M1 4.5h8M1 6.5h8M1 8.5h8" stroke="#7b7b7b" stroke-width="1"/></svg>
<div class="a" style="left:113px;top:258px;width:213px;height:20px;background:#fff;border:1px solid #969696"></div>
<div class="a" style="left:116px;top:262px;font-size:12px;color:#000;font-weight:normal;transform:scaleX(0.8745);transform-origin:0 0;">KASSA</div>
<div class="a" style="left:304px;top:259px;width:21px;height:18px;background:radial-gradient(ellipse 9px 8px at 11px 10px,#dedede,#f2f2f2 80%,#fbfbfb);border-left:1px solid #d4d4d4"></div>
<svg style="left:310px;top:262px" width="10" height="11" viewBox="0 0 10 11"><rect x="0.5" y="0.5" width="9" height="10" fill="#fff" stroke="#7b7b7b"/><path d="M1 2.5h8M1 4.5h8M1 6.5h8M1 8.5h8" stroke="#7b7b7b" stroke-width="1"/></svg>
<div class="a" style="left:113px;top:281px;width:213px;height:20px;background:#fff;border:1px solid #969696"></div>
<div class="a" style="left:304px;top:282px;width:21px;height:18px;background:radial-gradient(ellipse 9px 8px at 11px 10px,#dedede,#f2f2f2 80%,#fbfbfb);border-left:1px solid #d4d4d4"></div>
<svg style="left:310px;top:285px" width="10" height="11" viewBox="0 0 10 11"><rect x="0.5" y="0.5" width="9" height="10" fill="#fff" stroke="#7b7b7b"/><path d="M1 2.5h8M1 4.5h8M1 6.5h8M1 8.5h8" stroke="#7b7b7b" stroke-width="1"/></svg>
<div class="a" style="left:113px;top:304px;width:213px;height:20px;background:#fff;border:1px solid #969696"></div>
<div class="a" style="left:116px;top:308px;font-size:12px;color:#000;font-weight:normal;transform:scaleX(0.8700);transform-origin:0 0;">Kassï¿½r</div>
<div class="a" style="left:304px;top:305px;width:21px;height:18px;background:radial-gradient(ellipse 9px 8px at 11px 10px,#dedede,#f2f2f2 80%,#fbfbfb);border-left:1px solid #d4d4d4"></div>
<svg style="left:310px;top:308px" width="10" height="11" viewBox="0 0 10 11"><rect x="0.5" y="0.5" width="9" height="10" fill="#fff" stroke="#7b7b7b"/><path d="M1 2.5h8M1 4.5h8M1 6.5h8M1 8.5h8" stroke="#7b7b7b" stroke-width="1"/></svg>
<div class="a" style="left:113px;top:326px;width:213px;height:20px;background:#fff;border:1px solid #969696"></div>
<div class="a" style="left:360px;top:217px;font-size:12px;color:#000;font-weight:normal;transform:scaleX(0.8828);transform-origin:0 0;">Betvillk:</div>
<div class="a" style="left:360px;top:240px;font-size:12px;color:#000;font-weight:normal;transform:scaleX(0.9079);transform-origin:0 0;">Levvillk:</div>
<div class="a" style="left:360px;top:262px;font-size:12px;color:#000;font-weight:normal;transform:scaleX(0.8900);transform-origin:0 0;">Levsätt:</div>
<div class="a" style="left:360px;top:285px;font-size:12px;color:#000;font-weight:normal;transform:scaleX(0.8662);transform-origin:0 0;">Speditör:</div>
<div class="a" style="left:360px;top:309px;font-size:12px;color:#000;font-weight:normal;transform:scaleX(0.8793);transform-origin:0 0;">Resenh:</div>
<div class="a" style="left:360px;top:332px;font-size:12px;color:#000;font-weight:normal;transform:scaleX(0.8604);transform-origin:0 0;">Projekt:</div>
<div class="a" style="left:419px;top:213px;width:105px;height:20px;background:#fff;border:1px solid #969696"></div>
<div class="a" style="left:422px;top:217px;font-size:12px;color:#000;font-weight:normal;transform:scaleX(0.8700);transform-origin:0 0;">N</div>
<div class="a" style="left:502px;top:214px;width:21px;height:18px;background:radial-gradient(ellipse 9px 8px at 11px 10px,#dedede,#f2f2f2 80%,#fbfbfb);border-left:1px solid #d4d4d4"></div>
<svg style="left:508px;top:217px" width="10" height="11" viewBox="0 0 10 11"><rect x="0.5" y="0.5" width="9" height="10" fill="#fff" stroke="#7b7b7b"/><path d="M1 2.5h8M1 4.5h8M1 6.5h8M1 8.5h8" stroke="#7b7b7b" stroke-width="1"/></svg>
<div class="a" style="left:419px;top:235px;width:105px;height:20px;background:#fff;border:1px solid #969696"></div>
<div class="a" style="left:422px;top:239px;font-size:12px;color:#000;font-weight:normal;transform:scaleX(0.8634);transform-origin:0 0;">FVL</div>
<div class="a" style="left:502px;top:236px;width:21px;height:18px;background:radial-gradient(ellipse 9px 8px at 11px 10px,#dedede,#f2f2f2 80%,#fbfbfb);border-left:1px solid #d4d4d4"></div>
<svg style="left:508px;top:239px" width="10" height="11" viewBox="0 0 10 11"><rect x="0.5" y="0.5" width="9" height="10" fill="#fff" stroke="#7b7b7b"/><path d="M1 2.5h8M1 4.5h8M1 6.5h8M1 8.5h8" stroke="#7b7b7b" stroke-width="1"/></svg>
<div class="a" style="left:419px;top:258px;width:105px;height:20px;background:#fff;border:1px solid #969696"></div>
<div class="a" style="left:502px;top:259px;width:21px;height:18px;background:radial-gradient(ellipse 9px 8px at 11px 10px,#dedede,#f2f2f2 80%,#fbfbfb);border-left:1px solid #d4d4d4"></div>
<svg style="left:508px;top:262px" width="10" height="11" viewBox="0 0 10 11"><rect x="0.5" y="0.5" width="9" height="10" fill="#fff" stroke="#7b7b7b"/><path d="M1 2.5h8M1 4.5h8M1 6.5h8M1 8.5h8" stroke="#7b7b7b" stroke-width="1"/></svg>
<div class="a" style="left:419px;top:281px;width:105px;height:20px;background:#fff;border:1px solid #969696"></div>
<div class="a" style="left:502px;top:282px;width:21px;height:18px;background:radial-gradient(ellipse 9px 8px at 11px 10px,#dedede,#f2f2f2 80%,#fbfbfb);border-left:1px solid #d4d4d4"></div>
<svg style="left:508px;top:285px" width="10" height="11" viewBox="0 0 10 11"><rect x="0.5" y="0.5" width="9" height="10" fill="#fff" stroke="#7b7b7b"/><path d="M1 2.5h8M1 4.5h8M1 6.5h8M1 8.5h8" stroke="#7b7b7b" stroke-width="1"/></svg>
<div class="a" style="left:419px;top:304px;width:105px;height:20px;background:#fff;border:1px solid #969696"></div>
<div class="a" style="left:502px;top:305px;width:21px;height:18px;background:radial-gradient(ellipse 9px 8px at 11px 10px,#dedede,#f2f2f2 80%,#fbfbfb);border-left:1px solid #d4d4d4"></div>
<svg style="left:508px;top:308px" width="10" height="11" viewBox="0 0 10 11"><rect x="0.5" y="0.5" width="9" height="10" fill="#fff" stroke="#7b7b7b"/><path d="M1 2.5h8M1 4.5h8M1 6.5h8M1 8.5h8" stroke="#7b7b7b" stroke-width="1"/></svg>
<div class="a" style="left:419px;top:326px;width:105px;height:20px;background:#fff;border:1px solid #969696"></div>
<div class="a" style="left:502px;top:327px;width:21px;height:18px;background:radial-gradient(ellipse 9px 8px at 11px 10px,#dedede,#f2f2f2 80%,#fbfbfb);border-left:1px solid #d4d4d4"></div>
<svg style="left:508px;top:330px" width="10" height="11" viewBox="0 0 10 11"><rect x="0.5" y="0.5" width="9" height="10" fill="#fff" stroke="#7b7b7b"/><path d="M1 2.5h8M1 4.5h8M1 6.5h8M1 8.5h8" stroke="#7b7b7b" stroke-width="1"/></svg>
<div class="a" style="left:558px;top:217px;font-size:12px;color:#000;font-weight:normal;transform:scaleX(0.8725);transform-origin:0 0;">Fakturadatum:</div>
<div class="a" style="left:558px;top:240px;font-size:12px;color:#000;font-weight:normal;transform:scaleX(0.8606);transform-origin:0 0;">Förfallodatum:</div>
<div class="a" style="left:558px;top:262px;font-size:12px;color:#000;font-weight:normal;transform:scaleX(0.8763);transform-origin:0 0;">Leveransdatum:</div>
<div class="a" style="left:558px;top:285px;font-size:12px;color:#000;font-weight:normal;transform:scaleX(0.8487);transform-origin:0 0;">Ert ordernr:</div>
<div class="a" style="left:558px;top:308px;font-size:12px;color:#000;font-weight:normal;transform:scaleX(0.8898);transform-origin:0 0;">Referenskod:</div>
<div class="a" style="left:642px;top:213px;width:105px;height:20px;background:#fff;border:1px solid #969696"></div>
<div class="a" style="left:645px;top:217px;font-size:12px;color:#000;font-weight:normal;transform:scaleX(0.8749);transform-origin:0 0;">2021-02-16</div>
<div class="a" style="left:714px;top:217px;font-size:12px;color:#8a8a8a;font-weight:normal;transform:scaleX(0.8700);transform-origin:0 0;">ti</div>
<div class="a" style="left:725px;top:214px;width:21px;height:18px;background:radial-gradient(ellipse 9px 8px at 11px 10px,#dedede,#f2f2f2 80%,#fbfbfb);border-left:1px solid #d4d4d4"></div>
<svg style="left:731px;top:217px" width="10" height="12" viewBox="0 0 10 12"><rect x="0.5" y="0.5" width="9" height="11" fill="#b9b9b9" stroke="#7a7a7a"/><rect x="1" y="1" width="8" height="2" fill="#939393"/><rect x="1" y="4" width="2" height="1" fill="#fff"/><rect x="4" y="4" width="1" height="1" fill="#fff"/><rect x="6" y="4" width="1" height="1" fill="#fff"/><rect x="8" y="4" width="1" height="1" fill="#fff"/><rect x="1" y="6" width="2" height="1" fill="#fff"/><rect x="4" y="6" width="1" height="1" fill="#fff"/><rect x="6" y="6" width="1" height="1" fill="#fff"/><rect x="8" y="6" width="1" height="1" fill="#fff"/><rect x="1" y="8" width="2" height="1" fill="#fff"/><rect x="4" y="8" width="1" height="1" fill="#fff"/><rect x="6" y="8" width="1" height="1" fill="#fff"/><rect x="8" y="8" width="1" height="1" fill="#fff"/><rect x="1" y="10" width="2" height="1" fill="#fff"/><rect x="4" y="10" width="1" height="1" fill="#fff"/><rect x="6" y="10" width="1" height="1" fill="#fff"/><rect x="8" y="10" width="1" height="1" fill="#fff"/><rect x="3.5" y="5.5" width="2" height="2" fill="#fff" stroke="#444"/></svg>
<div class="a" style="left:642px;top:235px;width:105px;height:20px;background:#fff;border:1px solid #969696"></div>
<div class="a" style="left:645px;top:239px;font-size:12px;color:#000;font-weight:normal;transform:scaleX(0.8749);transform-origin:0 0;">2021-02-16</div>
<div class="a" style="left:714px;top:239px;font-size:12px;color:#8a8a8a;font-weight:normal;transform:scaleX(0.8700);transform-origin:0 0;">ti</div>
<div class="a" style="left:725px;top:236px;width:21px;height:18px;background:radial-gradient(ellipse 9px 8px at 11px 10px,#dedede,#f2f2f2 80%,#fbfbfb);border-left:1px solid #d4d4d4"></div>
<svg style="left:731px;top:239px" width="10" height="12" viewBox="0 0 10 12"><rect x="0.5" y="0.5" width="9" height="11" fill="#b9b9b9" stroke="#7a7a7a"/><rect x="1" y="1" width="8" height="2" fill="#939393"/><rect x="1" y="4" width="2" height="1" fill="#fff"/><rect x="4" y="4" width="1" height="1" fill="#fff"/><rect x="6" y="4" width="1" height="1" fill="#fff"/><rect x="8" y="4" width="1" height="1" fill="#fff"/><rect x="1" y="6" width="2" height="1" fill="#fff"/><rect x="4" y="6" width="1" height="1" fill="#fff"/><rect x="6" y="6" width="1" height="1" fill="#fff"/><rect x="8" y="6" width="1" height="1" fill="#fff"/><rect x="1" y="8" width="2" height="1" fill="#fff"/><rect x="4" y="8" width="1" height="1" fill="#fff"/><rect x="6" y="8" width="1" height="1" fill="#fff"/><rect x="8" y="8" width="1" height="1" fill="#fff"/><rect x="1" y="10" width="2" height="1" fill="#fff"/><rect x="4" y="10" width="1" height="1" fill="#fff"/><rect x="6" y="10" width="1" height="1" fill="#fff"/><rect x="8" y="10" width="1" height="1" fill="#fff"/><rect x="3.5" y="5.5" width="2" height="2" fill="#fff" stroke="#444"/></svg>
<div class="a" style="left:642px;top:258px;width:105px;height:20px;background:#fff;border:1px solid #969696"></div>
<div class="a" style="left:645px;top:262px;font-size:12px;color:#000;font-weight:normal;transform:scaleX(0.8749);transform-origin:0 0;">2021-02-16</div>
<div class="a" style="left:714px;top:262px;font-size:12px;color:#8a8a8a;font-weight:normal;transform:scaleX(0.8700);transform-origin:0 0;">ti</div>
<div class="a" style="left:725px;top:259px;width:21px;height:18px;background:radial-gradient(ellipse 9px 8px at 11px 10px,#dedede,#f2f2f2 80%,#fbfbfb);border-left:1px solid #d4d4d4"></div>
<svg style="left:731px;top:262px" width="10" height="12" viewBox="0 0 10 12"><rect x="0.5" y="0.5" width="9" height="11" fill="#b9b9b9" stroke="#7a7a7a"/><rect x="1" y="1" width="8" height="2" fill="#939393"/><rect x="1" y="4" width="2" height="1" fill="#fff"/><rect x="4" y="4" width="1" height="1" fill="#fff"/><rect x="6" y="4" width="1" height="1" fill="#fff"/><rect x="8" y="4" width="1" height="1" fill="#fff"/><rect x="1" y="6" width="2" height="1" fill="#fff"/><rect x="4" y="6" width="1" height="1" fill="#fff"/><rect x="6" y="6" width="1" height="1" fill="#fff"/><rect x="8" y="6" width="1" height="1" fill="#fff"/><rect x="1" y="8" width="2" height="1" fill="#fff"/><rect x="4" y="8" width="1" height="1" fill="#fff"/><rect x="6" y="8" width="1" height="1" fill="#fff"/><rect x="8" y="8" width="1" height="1" fill="#fff"/><rect x="1" y="10" width="2" height="1" fill="#fff"/><rect x="4" y="10" width="1" height="1" fill="#fff"/><rect x="6" y="10" width="1" height="1" fill="#fff"/><rect x="8" y="10" width="1" height="1" fill="#fff"/><rect x="3.5" y="5.5" width="2" height="2" fill="#fff" stroke="#444"/></svg>
<div class="a" style="left:642px;top:281px;width:105px;height:20px;background:#fff;border:1px solid #969696"></div>
<div class="a" style="left:642px;top:304px;width:105px;height:20px;background:#fff;border:1px solid #969696"></div>
<div class="a" style="left:782px;top:217px;font-size:12px;color:#000;font-weight:normal;transform:scaleX(0.8462);transform-origin:0 0;">Kommentar:</div>
<div class="a" style="left:782px;top:235px;width:138px;height:88px;background:#fff;border:1px solid #a3a3a3"></div>
<div class="a" style="left:901px;top:236px;width:17px;height:86px;background:#ececec"></div>
<svg style="left:905px;top:243px" width="10" height="5" viewBox="0 0 10 5"><path d="M0 5 L5 0 L10 5Z" fill="#c4c4c4"/></svg>
<svg style="left:905px;top:311px" width="10" height="5" viewBox="0 0 10 5"><path d="M0 0 L5 5 L10 0Z" fill="#c4c4c4"/></svg>
<div class="a" style="left:785px;top:239px;font-size:12px;color:#000;font-weight:normal;transform:scaleX(0.8903);transform-origin:0 0;">Kassakvitto 72 i kassa 1</div>
<div class="a" style="left:784px;top:252px;font-size:12px;color:#000;font-weight:normal;transform:scaleX(0.9211);transform-origin:0 0;">klockan 08:40</div>
<div class="a" style="left:21px;top:375px;width:1526px;height:529px;background:#fff;border:1px solid #a0a0a0"></div>
<div class="a" style="left:22px;top:399px;width:1508px;height:18px;background:#dde7f0"></div>
<div class="a" style="left:22px;top:417px;width:1508px;height:18px;background:#f6f6f6"></div>
<div class="a" style="left:22px;top:435px;width:1508px;height:18px;background:#ffffff"></div>
<div class="a" style="left:22px;top:453px;width:1508px;height:18px;background:#f6f6f6"></div>
<div class="a" style="left:22px;top:471px;width:1508px;height:18px;background:#ffffff"></div>
<div class="a" style="left:22px;top:489px;width:1508px;height:18px;background:#f6f6f6"></div>
<div class="a" style="left:22px;top:507px;width:1508px;height:18px;background:#ffffff"></div>
<div class="a" style="left:22px;top:525px;width:1508px;height:18px;background:#f6f6f6"></div>
<div class="a" style="left:22px;top:543px;width:1508px;height:18px;background:#ffffff"></div>
<div class="a" style="left:22px;top:561px;width:1508px;height:18px;background:#f6f6f6"></div>
<div class="a" style="left:22px;top:579px;width:1508px;height:18px;background:#ffffff"></div>
<div class="a" style="left:22px;top:597px;width:1508px;height:18px;background:#f6f6f6"></div>
<div class="a" style="left:22px;top:615px;width:1508px;height:18px;background:#ffffff"></div>
<div class="a" style="left:22px;top:633px;width:1508px;height:18px;background:#f6f6f6"></div>
<div class="a" style="left:22px;top:651px;width:1508px;height:18px;background:#ffffff"></div>
<div class="a" style="left:22px;top:669px;width:1508px;height:18px;background:#f6f6f6"></div>
<div class="a" style="left:22px;top:687px;width:1508px;height:18px;background:#ffffff"></div>
<div class="a" style="left:22px;top:705px;width:1508px;height:18px;background:#f6f6f6"></div>
<div class="a" style="left:22px;top:723px;width:1508px;height:18px;background:#ffffff"></div>
<div class="a" style="left:22px;top:741px;width:1508px;height:18px;background:#f6f6f6"></div>
<div class="a" style="left:22px;top:759px;width:1508px;height:18px;background:#ffffff"></div>
<div class="a" style="left:22px;top:777px;width:1508px;height:18px;background:#f6f6f6"></div>
<div class="a" style="left:22px;top:795px;width:1508px;height:18px;background:#ffffff"></div>
<div class="a" style="left:22px;top:813px;width:1508px;height:18px;background:#f6f6f6"></div>
<div class="a" style="left:22px;top:831px;width:1508px;height:18px;background:#ffffff"></div>
<div class="a" style="left:22px;top:849px;width:1508px;height:18px;background:#f6f6f6"></div>
<div class="a" style="left:22px;top:867px;width:1508px;height:18px;background:#ffffff"></div>
<div class="a" style="left:785px;top:399px;width:127px;height:18px;background:#a9cdec"></div>
<div class="a" style="left:22px;top:376px;width:1508px;height:23px;background:linear-gradient(#f8f8f8,#ededed 45%,#dcdcdc);border-bottom:1px solid #d2d2d2"></div>
<div class="a" style="left:270px;top:376px;width:1px;height:510px;background:#dadada"></div>
<div class="a" style="left:419px;top:376px;width:1px;height:510px;background:#dadada"></div>
<div class="a" style="left:487px;top:376px;width:1px;height:510px;background:#dadada"></div>
<div class="a" style="left:544px;top:376px;width:1px;height:510px;background:#dadada"></div>
<div class="a" style="left:623px;top:376px;width:1px;height:510px;background:#dadada"></div>
<div class="a" style="left:688px;top:376px;width:1px;height:510px;background:#dadada"></div>
<div class="a" style="left:739px;top:376px;width:1px;height:510px;background:#dadada"></div>
<div class="a" style="left:784px;top:376px;width:1px;height:510px;background:#dadada"></div>
<div class="a" style="left:912px;top:376px;width:1px;height:510px;background:#dadada"></div>
<div class="a" style="left:944px;top:376px;width:1px;height:510px;background:#dadada"></div>
<div class="a" style="left:1009px;top:376px;width:1px;height:510px;background:#dadada"></div>
<div class="a" style="left:1077px;top:376px;width:1px;height:510px;background:#dadada"></div>
<div class="a" style="left:1144px;top:376px;width:1px;height:510px;background:#dadada"></div>
<div class="a" style="left:1286px;top:376px;width:1px;height:510px;background:#dadada"></div>
<div class="a" style="left:1361px;top:376px;width:1px;height:510px;background:#dadada"></div>
<div class="a" style="left:1418px;top:376px;width:1px;height:510px;background:#dadada"></div>
<div class="a" style="left:1513px;top:376px;width:1px;height:510px;background:#dadada"></div>
<div class="a" style="left:170px;top:376px;width:1px;height:510px;background:#000"></div>
<div class="a" style="left:26px;top:380px;font-size:12px;color:#000;font-weight:normal;transform:scaleX(0.8533);transform-origin:0 0;">Artikelnummer</div>
<div class="a" style="left:175px;top:380px;font-size:12px;color:#000;font-weight:normal;transform:scaleX(0.8903);transform-origin:0 0;">Streckkod</div>
<div class="a" style="left:275px;top:380px;font-size:12px;color:#000;font-weight:normal;transform:scaleX(0.8566);transform-origin:0 0;">Benämning</div>
<div class="a" style="right:1437px;top:380px;font-size:12px;color:#000;font-weight:normal;text-align:right;transform:scaleX(0.8588);transform-origin:100% 0;">Beställt antal</div>
<div class="a" style="left:492px;top:380px;font-size:12px;color:#000;font-weight:normal;transform:scaleX(0.8610);transform-origin:0 0;">Enhet</div>
<div class="a" style="right:1301px;top:380px;font-size:12px;color:#000;font-weight:normal;text-align:right;transform:scaleX(0.8745);transform-origin:100% 0;">Levererat antal</div>
<div class="a" style="right:1236px;top:380px;font-size:12px;color:#000;font-weight:normal;text-align:right;transform:scaleX(0.8199);transform-origin:100% 0;">à-pris</div>
<div class="a" style="right:1185px;top:380px;font-size:12px;color:#000;font-weight:normal;text-align:right;transform:scaleX(0.8769);transform-origin:100% 0;">Rabatt</div>
<div class="a" style="right:1012px;top:380px;font-size:12px;color:#000;font-weight:normal;text-align:right;transform:scaleX(0.8103);transform-origin:100% 0;">Summa</div>
<div class="a" style="left:917px;top:380px;font-size:12px;color:#000;font-weight:normal;transform:scaleX(0.9000);transform-origin:0 0;">Skriv</div>
<div class="a" style="right:915px;top:380px;font-size:12px;color:#000;font-weight:normal;text-align:right;transform:scaleX(0.8645);transform-origin:100% 0;">Restn ant</div>
<div class="a" style="left:1014px;top:380px;font-size:12px;color:#000;font-weight:normal;transform:scaleX(0.8816);transform-origin:0 0;">Restn levdat</div>
<div class="a" style="left:1082px;top:380px;font-size:12px;color:#000;font-weight:normal;transform:scaleX(0.8882);transform-origin:0 0;">Levdat</div>
<div class="a" style="right:637px;top:380px;font-size:12px;color:#000;font-weight:normal;text-align:right;transform:scaleX(0.8418);transform-origin:100% 0;">Ordernr</div>
<div class="a" style="left:1291px;top:380px;font-size:12px;color:#000;font-weight:normal;transform:scaleX(0.8652);transform-origin:0 0;">Momskod</div>
<div class="a" style="left:1366px;top:380px;font-size:12px;color:#000;font-weight:normal;transform:scaleX(0.8610);transform-origin:0 0;">Konto</div>
<div class="a" style="left:1423px;top:380px;font-size:12px;color:#000;font-weight:normal;transform:scaleX(0.8778);transform-origin:0 0;">Resultatenhet</div>
<div class="a" style="left:1518px;top:380px;width:13.79px;overflow:hidden;font-size:12px;transform:scaleX(0.87);transform-origin:0 0">Pr</div>
<div class="a" style="left:26px;top:402px;font-size:12px;color:#000;font-weight:normal;transform:scaleX(0.8700);transform-origin:0 0;">107</div>
<div class="a" style="left:175px;top:402px;font-size:12px;color:#000;font-weight:normal;transform:scaleX(0.9026);transform-origin:0 0;">7330256101194</div>
<div class="a" style="left:275px;top:402px;width:168.66px;overflow:hidden;font-size:12px;transform:scaleX(0.8538);transform-origin:0 0">Aktieprogrammet</div>
<div class="a" style="right:1437px;top:402px;font-size:12px;color:#000;font-weight:normal;text-align:right;transform:scaleX(0.8700);transform-origin:100% 0;">1,0</div>
<div class="a" style="left:492px;top:402px;font-size:12px;color:#000;font-weight:normal;transform:scaleX(0.8700);transform-origin:0 0;">st</div>
<div class="a" style="right:1301px;top:402px;font-size:12px;color:#000;font-weight:normal;text-align:right;transform:scaleX(0.8700);transform-origin:100% 0;">1,0</div>
<div class="a" style="right:1235px;top:402px;font-size:12px;color:#000;font-weight:normal;text-align:right;transform:scaleX(0.8700);transform-origin:100% 0;">3 125,00</div>
<div class="a" style="right:1185px;top:402px;font-size:12px;color:#000;font-weight:normal;text-align:right;transform:scaleX(0.8700);transform-origin:100% 0;">0,00</div>
<div class="a" style="left:740px;top:402px;font-size:12px;color:#000;font-weight:normal;transform:scaleX(0.8700);transform-origin:0 0;">kr</div>
<div class="a" style="right:1011px;top:402px;font-size:12px;color:#000;font-weight:normal;text-align:right;transform:scaleX(0.8700);transform-origin:100% 0;">3 125,00</div>
<div class="a" style="left:923px;top:402px;width:13px;height:13px;background:#fff;border:1px solid #7a7a7a"></div>
<svg style="left:925px;top:405px" width="9" height="8" viewBox="0 0 9 8"><path d="M0.8 3.8 L3.3 6.3 L8.2 0.9" fill="none" stroke="#2a6a9a" stroke-width="1.7"/></svg>
<div class="a" style="right:915px;top:402px;font-size:12px;color:#000;font-weight:normal;text-align:right;transform:scaleX(0.8700);transform-origin:100% 0;">0,0</div>
<div class="a" style="left:1082px;top:402px;font-size:12px;color:#000;font-weight:normal;transform:scaleX(0.8749);transform-origin:0 0;">2021-02-16</div>
<div class="a" style="left:1291px;top:402px;font-size:12px;color:#000;font-weight:normal;transform:scaleX(0.8700);transform-origin:0 0;">1</div>
<div class="a" style="left:1366px;top:402px;font-size:12px;color:#000;font-weight:normal;transform:scaleX(0.8700);transform-origin:0 0;">3051</div>
<div class="a" style="left:26px;top:420px;font-size:12px;color:#000;font-weight:normal;transform:scaleX(0.8700);transform-origin:0 0;">109</div>
<div class="a" style="left:175px;top:420px;font-size:12px;color:#000;font-weight:normal;transform:scaleX(0.8700);transform-origin:0 0;">7330256101446</div>
<div class="a" style="left:275px;top:420px;width:165.52px;overflow:hidden;font-size:12px;transform:scaleX(0.8700);transform-origin:0 0">Antivirusprogrammet</div>
<div class="a" style="right:1437px;top:420px;font-size:12px;color:#000;font-weight:normal;text-align:right;transform:scaleX(0.8700);transform-origin:100% 0;">1,0</div>
<div class="a" style="left:492px;top:420px;font-size:12px;color:#000;font-weight:normal;transform:scaleX(0.8700);transform-origin:0 0;">st</div>
<div class="a" style="right:1301px;top:420px;font-size:12px;color:#000;font-weight:normal;text-align:right;transform:scaleX(0.8700);transform-origin:100% 0;">1,0</div>
<div class="a" style="right:1235px;top:420px;font-size:12px;color:#000;font-weight:normal;text-align:right;transform:scaleX(0.8700);transform-origin:100% 0;">7 250,00</div>
<div class="a" style="right:1185px;top:420px;font-size:12px;color:#000;font-weight:normal;text-align:right;transform:scaleX(0.8700);transform-origin:100% 0;">0,00</div>
<div class="a" style="left:740px;top:420px;font-size:12px;color:#000;font-weight:normal;transform:scaleX(0.8700);transform-origin:0 0;">kr</div>
<div class="a" style="right:1011px;top:420px;font-size:12px;color:#000;font-weight:normal;text-align:right;transform:scaleX(0.8700);transform-origin:100% 0;">7 250,00</div>
<div class="a" style="left:923px;top:420px;width:13px;height:13px;background:#fff;border:1px solid #7a7a7a"></div>
<svg style="left:925px;top:423px" width="9" height="8" viewBox="0 0 9 8"><path d="M0.8 3.8 L3.3 6.3 L8.2 0.9" fill="none" stroke="#2a6a9a" stroke-width="1.7"/></svg>
<div class="a" style="right:915px;top:420px;font-size:12px;color:#000;font-weight:normal;text-align:right;transform:scaleX(0.8700);transform-origin:100% 0;">0,0</div>
<div class="a" style="left:1082px;top:420px;font-size:12px;color:#000;font-weight:normal;transform:scaleX(0.8749);transform-origin:0 0;">2021-02-16</div>
<div class="a" style="left:1291px;top:420px;font-size:12px;color:#000;font-weight:normal;transform:scaleX(0.8700);transform-origin:0 0;">1</div>
<div class="a" style="left:1366px;top:420px;font-size:12px;color:#000;font-weight:normal;transform:scaleX(0.8700);transform-origin:0 0;">3051</div>
<div class="a" style="left:26px;top:438px;font-size:12px;color:#000;font-weight:normal;transform:scaleX(0.8700);transform-origin:0 0;">602</div>
<div class="a" style="left:175px;top:438px;font-size:12px;color:#000;font-weight:normal;transform:scaleX(0.8700);transform-origin:0 0;">7330256101453</div>
<div class="a" style="left:275px;top:438px;width:156.23px;overflow:hidden;font-size:12px;transform:scaleX(0.9217);transform-origin:0 0">Cd Skivor Recordable 10-pack</div>
<div class="a" style="right:1437px;top:438px;font-size:12px;color:#000;font-weight:normal;text-align:right;transform:scaleX(0.8700);transform-origin:100% 0;">2,0</div>
<div class="a" style="left:492px;top:438px;font-size:12px;color:#000;font-weight:normal;transform:scaleX(0.8700);transform-origin:0 0;">pkt</div>
<div class="a" style="right:1301px;top:438px;font-size:12px;color:#000;font-weight:normal;text-align:right;transform:scaleX(0.8700);transform-origin:100% 0;">2,0</div>
<div class="a" style="right:1235px;top:438px;font-size:12px;color:#000;font-weight:normal;text-align:right;transform:scaleX(0.8700);transform-origin:100% 0;">138,00</div>
<div class="a" style="right:1185px;top:438px;font-size:12px;color:#000;font-weight:normal;text-align:right;transform:scaleX(0.8700);transform-origin:100% 0;">0,00</div>
<div class="a" style="left:740px;top:438px;font-size:12px;color:#000;font-weight:normal;transform:scaleX(0.8700);transform-origin:0 0;">kr</div>
<div class="a" style="right:1011px;top:438px;font-size:12px;color:#000;font-weight:normal;text-align:right;transform:scaleX(0.8700);transform-origin:100% 0;">276,00</div>
<div class="a" style="left:923px;top:438px;width:13px;height:13px;background:#fff;border:1px solid #7a7a7a"></div>
<svg style="left:925px;top:441px" width="9" height="8" viewBox="0 0 9 8"><path d="M0.8 3.8 L3.3 6.3 L8.2 0.9" fill="none" stroke="#2a6a9a" stroke-width="1.7"/></svg>
<div class="a" style="right:915px;top:438px;font-size:12px;color:#000;font-weight:normal;text-align:right;transform:scaleX(0.8700);transform-origin:100% 0;">0,0</div>
<div class="a" style="left:1082px;top:438px;font-size:12px;color:#000;font-weight:normal;transform:scaleX(0.8749);transform-origin:0 0;">2021-02-16</div>
<div class="a" style="left:1291px;top:438px;font-size:12px;color:#000;font-weight:normal;transform:scaleX(0.8700);transform-origin:0 0;">1</div>
<div class="a" style="left:1366px;top:438px;font-size:12px;color:#000;font-weight:normal;transform:scaleX(0.8700);transform-origin:0 0;">3051</div>
<div class="a" style="left:26px;top:456px;font-size:12px;color:#000;font-weight:normal;transform:scaleX(0.8700);transform-origin:0 0;">113</div>
<div class="a" style="left:175px;top:456px;font-size:12px;color:#000;font-weight:normal;transform:scaleX(0.8700);transform-origin:0 0;">7330256101620</div>
<div class="a" style="left:275px;top:456px;width:165.52px;overflow:hidden;font-size:12px;transform:scaleX(0.8700);transform-origin:0 0">Vuxenspelen</div>
<div class="a" style="right:1437px;top:456px;font-size:12px;color:#000;font-weight:normal;text-align:right;transform:scaleX(0.8700);transform-origin:100% 0;">1,0</div>
<div class="a" style="left:492px;top:456px;font-size:12px;color:#000;font-weight:normal;transform:scaleX(0.8700);transform-origin:0 0;">st</div>
<div class="a" style="right:1301px;top:456px;font-size:12px;color:#000;font-weight:normal;text-align:right;transform:scaleX(0.8700);transform-origin:100% 0;">1,0</div>
<div class="a" style="right:1235px;top:456px;font-size:12px;color:#000;font-weight:normal;text-align:right;transform:scaleX(0.8700);transform-origin:100% 0;">1 750,00</div>
<div class="a" style="right:1185px;top:456px;font-size:12px;color:#000;font-weight:normal;text-align:right;transform:scaleX(0.8700);transform-origin:100% 0;">50,00</div>
<div class="a" style="left:740px;top:456px;font-size:12px;color:#000;font-weight:normal;transform:scaleX(0.8700);transform-origin:0 0;">%</div>
<div class="a" style="right:1011px;top:456px;font-size:12px;color:#000;font-weight:normal;text-align:right;transform:scaleX(0.8700);transform-origin:100% 0;">875,00</div>
<div class="a" style="left:923px;top:456px;width:13px;height:13px;background:#fff;border:1px solid #7a7a7a"></div>
<svg style="left:925px;top:459px" width="9" height="8" viewBox="0 0 9 8"><path d="M0.8 3.8 L3.3 6.3 L8.2 0.9" fill="none" stroke="#2a6a9a" stroke-width="1.7"/></svg>
<div class="a" style="right:915px;top:456px;font-size:12px;color:#000;font-weight:normal;text-align:right;transform:scaleX(0.8700);transform-origin:100% 0;">0,0</div>
<div class="a" style="left:1082px;top:456px;font-size:12px;color:#000;font-weight:normal;transform:scaleX(0.8749);transform-origin:0 0;">2021-02-16</div>
<div class="a" style="left:1291px;top:456px;font-size:12px;color:#000;font-weight:normal;transform:scaleX(0.8700);transform-origin:0 0;">1</div>
<div class="a" style="left:1366px;top:456px;font-size:12px;color:#000;font-weight:normal;transform:scaleX(0.8700);transform-origin:0 0;">3051</div>
<div class="a" style="left:153px;top:399px;width:17px;height:17px;background:linear-gradient(#fdfdfd,#ebebeb);border:1px solid #8a8a8a"></div>
<svg style="left:157.5px;top:405px" width="8" height="5" viewBox="0 0 8 5"><path d="M0.8 0.8 L4 3.8 L7.2 0.8" fill="none" stroke="#555" stroke-width="1.6"/></svg>
<div class="a" style="left:402px;top:399px;width:17px;height:17px;background:linear-gradient(#fdfdfd,#ebebeb);border:1px solid #8a8a8a"></div>
<svg style="left:406.5px;top:405px" width="8" height="5" viewBox="0 0 8 5"><path d="M0.8 0.8 L4 3.8 L7.2 0.8" fill="none" stroke="#555" stroke-width="1.6"/></svg>
<div class="a" style="left:527px;top:399px;width:17px;height:17px;background:linear-gradient(#fdfdfd,#ebebeb);border:1px solid #8a8a8a"></div>
<svg style="left:531.5px;top:405px" width="8" height="5" viewBox="0 0 8 5"><path d="M0.8 0.8 L4 3.8 L7.2 0.8" fill="none" stroke="#555" stroke-width="1.6"/></svg>
<div class="a" style="left:1344px;top:399px;width:17px;height:17px;background:linear-gradient(#fdfdfd,#ebebeb);border:1px solid #8a8a8a"></div>
<svg style="left:1348.5px;top:405px" width="8" height="5" viewBox="0 0 8 5"><path d="M0.8 0.8 L4 3.8 L7.2 0.8" fill="none" stroke="#555" stroke-width="1.6"/></svg>
<div class="a" style="left:1401px;top:399px;width:17px;height:17px;background:linear-gradient(#fdfdfd,#ebebeb);border:1px solid #8a8a8a"></div>
<svg style="left:1405.5px;top:405px" width="8" height="5" viewBox="0 0 8 5"><path d="M0.8 0.8 L4 3.8 L7.2 0.8" fill="none" stroke="#555" stroke-width="1.6"/></svg>
<div class="a" style="left:1496px;top:399px;width:17px;height:17px;background:linear-gradient(#fdfdfd,#ebebeb);border:1px solid #8a8a8a"></div>
<svg style="left:1500.5px;top:405px" width="8" height="5" viewBox="0 0 8 5"><path d="M0.8 0.8 L4 3.8 L7.2 0.8" fill="none" stroke="#555" stroke-width="1.6"/></svg>
<div class="a" style="left:1530px;top:376px;width:16px;height:510px;background:#f0f0f0"></div>
<svg style="left:1534px;top:381px" width="8" height="6" viewBox="0 0 8 6"><path d="M0.8 5 L4 1.5 L7.2 5" fill="none" stroke="#555" stroke-width="1.7"/></svg>
<div class="a" style="left:1530px;top:393px;width:15px;height:23px;background:#cdcdcd"></div>
<svg style="left:1534px;top:875px" width="8" height="6" viewBox="0 0 8 6"><path d="M0.8 1 L4 4.5 L7.2 1" fill="none" stroke="#555" stroke-width="1.7"/></svg>
<div class="a" style="left:22px;top:886px;width:1524px;height:17px;background:#f0f0f0"></div>
<div class="a" style="left:39px;top:887px;width:1132px;height:15px;background:#cdcdcd"></div>
<svg style="left:27px;top:891px" width="6" height="8" viewBox="0 0 6 8"><path d="M5.2 0.8 L1.5 4 L5.2 7.2" fill="none" stroke="#4a4a4a" stroke-width="2"/></svg>
<svg style="left:1517px;top:891px" width="6" height="8" viewBox="0 0 6 8"><path d="M0.8 0.8 L4.5 4 L0.8 7.2" fill="none" stroke="#4a4a4a" stroke-width="2"/></svg>
<div class="a" style="left:21px;top:917px;font-size:12px;color:#000;font-weight:normal;transform:scaleX(0.8700);transform-origin:0 0;">Brutto:</div>
<div class="a" style="left:21px;top:939px;font-size:12px;color:#000;font-weight:normal;transform:scaleX(0.8700);transform-origin:0 0;">Netto:</div>
<div class="a" style="left:21px;top:961px;font-size:12px;color:#000;font-weight:normal;transform:scaleX(0.8700);transform-origin:0 0;">Exkl moms:</div>
<div class="a" style="left:21px;top:983px;font-size:12px;color:#000;font-weight:normal;transform:scaleX(0.8700);transform-origin:0 0;">Totalt:</div>
<div class="a" style="left:113px;top:914px;width:105px;height:20px;background:#f3f3f3;border:1px solid #969696"></div>
<div class="a" style="right:1706px;top:918px;font-size:12px;color:#000;font-weight:normal;text-align:right;transform:scaleX(0.8700);transform-origin:100% 0;">11 526,00</div>
<div class="a" style="left:113px;top:936px;width:105px;height:20px;background:#f3f3f3;border:1px solid #969696"></div>
<div class="a" style="right:1706px;top:940px;font-size:12px;color:#000;font-weight:normal;text-align:right;transform:scaleX(0.8700);transform-origin:100% 0;">11 526,00</div>
<div class="a" style="left:113px;top:958px;width:105px;height:20px;background:#f3f3f3;border:1px solid #969696"></div>
<div class="a" style="right:1706px;top:962px;font-size:12px;color:#000;font-weight:normal;text-align:right;transform:scaleX(0.8700);transform-origin:100% 0;">9 220,80</div>
<div class="a" style="left:113px;top:980px;width:105px;height:20px;background:#f3f3f3;border:1px solid #969696"></div>
<div class="a" style="right:1706px;top:984px;font-size:12px;color:#000;font-weight:normal;text-align:right;transform:scaleX(0.8700);transform-origin:100% 0;">11 526,00</div>
<div class="a" style="left:245px;top:917px;font-size:12px;color:#000;font-weight:normal;transform:scaleX(0.8700);transform-origin:0 0;">Fktrab %:</div>
<div class="a" style="left:245px;top:939px;font-size:12px;color:#000;font-weight:normal;transform:scaleX(0.8700);transform-origin:0 0;">Frakt:</div>
<div class="a" style="left:245px;top:961px;font-size:12px;color:#000;font-weight:normal;transform:scaleX(0.8700);transform-origin:0 0;">Moms:</div>
<div class="a" style="left:245px;top:983px;font-size:12px;color:#000;font-weight:normal;transform:scaleX(0.8700);transform-origin:0 0;">Valuta:</div>
<div class="a" style="left:303px;top:914px;width:72px;height:20px;background:#fff;border:1px solid #969696"></div>
<div class="a" style="right:1549px;top:918px;font-size:12px;color:#000;font-weight:normal;text-align:right;transform:scaleX(0.8700);transform-origin:100% 0;">0,0</div>
<div class="a" style="left:303px;top:936px;width:72px;height:20px;background:#fff;border:1px solid #969696"></div>
<div class="a" style="right:1549px;top:940px;font-size:12px;color:#000;font-weight:normal;text-align:right;transform:scaleX(0.8700);transform-origin:100% 0;">0,00</div>
<div class="a" style="left:303px;top:958px;width:72px;height:20px;background:#f3f3f3;border:1px solid #969696"></div>
<div class="a" style="right:1549px;top:962px;font-size:12px;color:#000;font-weight:normal;text-align:right;transform:scaleX(0.8700);transform-origin:100% 0;">2 305,20</div>
<div class="a" style="left:303px;top:980px;width:72px;height:20px;background:#f3f3f3;border:1px solid #969696"></div>
<div class="a" style="left:306px;top:984px;font-size:12px;color:#000;font-weight:normal;transform:scaleX(0.8700);transform-origin:0 0;">SEK</div>
<div class="a" style="left:401px;top:916px;width:13px;height:13px;background:#fff;border:1px solid #7a7a7a"></div>
<svg style="left:403px;top:919px" width="9" height="8" viewBox="0 0 9 8"><path d="M0.8 3.8 L3.3 6.3 L8.2 0.9" fill="none" stroke="#2a6a9a" stroke-width="1.7"/></svg>
<div class="a" style="left:420px;top:917px;font-size:12px;color:#000;font-weight:normal;transform:scaleX(0.8700);transform-origin:0 0;">Inklusive moms</div>
<div class="a" style="left:401px;top:939px;font-size:12px;color:#000;font-weight:normal;transform:scaleX(0.8700);transform-origin:0 0;">Expavg:</div>
<div class="a" style="left:401px;top:961px;font-size:12px;color:#000;font-weight:normal;transform:scaleX(0.8700);transform-origin:0 0;">Avrundn:</div>
<div class="a" style="left:452px;top:936px;width:72px;height:20px;background:#fff;border:1px solid #969696"></div>
<div class="a" style="right:1400px;top:940px;font-size:12px;color:#000;font-weight:normal;text-align:right;transform:scaleX(0.8700);transform-origin:100% 0;">0,00</div>
<div class="a" style="left:452px;top:958px;width:72px;height:20px;background:#f3f3f3;border:1px solid #969696"></div>
<div class="a" style="right:1400px;top:962px;font-size:12px;color:#000;font-weight:normal;text-align:right;transform:scaleX(0.8700);transform-origin:100% 0;">0,00</div>
<div class="a" style="left:558px;top:916px;width:113px;height:62px;border:1px solid #d2d2d2;border-radius:3px"></div>
<div class="a" style="left:565px;top:915px;width:33.59576875px;height:3px;background:#f3f3f3"></div>
<div class="a" style="left:567px;top:911px;font-size:12px;color:#000;font-weight:normal;transform:scaleX(0.8700);transform-origin:0 0;">Status</div>
<div class="a" style="left:567px;top:924px;width:13px;height:13px;background:#fff;border:1px solid #7a7a7a"></div>
<div class="a" style="left:586px;top:925px;font-size:12px;color:#000;font-weight:normal;transform:scaleX(0.8700);transform-origin:0 0;">Ej klar</div>
<div class="a" style="left:567px;top:940px;width:13px;height:13px;background:#fff;border:1px solid #7a7a7a"></div>
<div class="a" style="left:586px;top:941px;font-size:12px;color:#000;font-weight:normal;transform:scaleX(0.8700);transform-origin:0 0;">Makulerad</div>
<div class="a" style="left:567px;top:956px;width:13px;height:13px;background:#fff;border:1px solid #7a7a7a"></div>
<div class="a" style="left:586px;top:957px;font-size:12px;color:#000;font-weight:normal;transform:scaleX(0.8700);transform-origin:0 0;">Journalförd</div>
<div class="a" style="left:680px;top:916px;width:105px;height:62px;border:1px solid #d2d2d2;border-radius:3px"></div>
<div class="a" style="left:687px;top:915px;width:44.6018125px;height:3px;background:#f3f3f3"></div>
<div class="a" style="left:689px;top:911px;font-size:12px;color:#000;font-weight:normal;transform:scaleX(0.8700);transform-origin:0 0;">Utskrivet</div>
<div class="a" style="left:689px;top:924px;width:13px;height:13px;background:#fff;border:1px solid #7a7a7a"></div>
<svg style="left:691px;top:927px" width="9" height="8" viewBox="0 0 9 8"><path d="M0.8 3.8 L3.3 6.3 L8.2 0.9" fill="none" stroke="#2a6a9a" stroke-width="1.7"/></svg>
<div class="a" style="left:708px;top:925px;font-size:12px;color:#000;font-weight:normal;transform:scaleX(0.8700);transform-origin:0 0;">Faktura</div>
<div class="a" style="left:689px;top:940px;width:13px;height:13px;background:#fff;border:1px solid #7a7a7a"></div>
<div class="a" style="left:708px;top:941px;font-size:12px;color:#000;font-weight:normal;transform:scaleX(0.8700);transform-origin:0 0;">Extra Faktur...</div>
<div class="a" style="left:792px;top:916px;width:258px;height:62px;border:1px solid #d2d2d2;border-radius:3px"></div>
<div class="a" style="left:799px;top:915px;width:55.0418125px;height:3px;background:#f3f3f3"></div>
<div class="a" style="left:801px;top:911px;font-size:12px;color:#000;font-weight:normal;transform:scaleX(0.8700);transform-origin:0 0;">Utskriftsval</div>
<div class="a" style="left:801px;top:926px;font-size:12px;color:#000;font-weight:normal;transform:scaleX(0.8700);transform-origin:0 0;">Faktura:</div>
<div class="a" style="left:801px;top:950px;font-size:12px;color:#000;font-weight:normal;transform:scaleX(0.8700);transform-origin:0 0;">Extra dokument:</div>
<div class="a" style="left:884px;top:923px;width:158px;height:21px;background:#fff;border:1px solid #919191"></div>
<div class="a" style="left:1019px;top:924px;width:22px;height:19px;background:linear-gradient(#fdfdfd,#ececec);border-left:1px solid #cfcfcf"></div>
<svg style="left:1026.5px;top:931.0px" width="8" height="5" viewBox="0 0 8 5"><path d="M0.8 0.8 L4 3.8 L7.2 0.8" fill="none" stroke="#555" stroke-width="1.6"/></svg>
<div class="a" style="left:887px;top:928px;font-size:12px;color:#000;font-weight:normal;transform:scaleX(0.8700);transform-origin:0 0;">Skrivare</div>
<div class="a" style="left:884px;top:947px;width:158px;height:21px;background:#fff;border:1px solid #919191"></div>
<div class="a" style="left:1019px;top:948px;width:22px;height:19px;background:linear-gradient(#fdfdfd,#ececec);border-left:1px solid #cfcfcf"></div>
<svg style="left:1026.5px;top:955.0px" width="8" height="5" viewBox="0 0 8 5"><path d="M0.8 0.8 L4 3.8 L7.2 0.8" fill="none" stroke="#555" stroke-width="1.6"/></svg>
<div class="a" style="left:887px;top:952px;font-size:12px;color:#000;font-weight:normal;transform:scaleX(0.8700);transform-origin:0 0;">Skrivare</div>
<div class="a" style="left:1568px;top:141px;width:30px;height:880px;background:#386b8b;border-left:1px solid #2c5874;border-right:1px solid #2f5c7a"></div>
<div class="a" style="left:1569px;top:141px;width:2px;height:880px;background:#3d8cc4"></div>
<div class="a" style="left:1571px;top:141px;width:1px;height:880px;background:#30607f"></div>
<div class="a" style="left:1568px;top:141px;width:30px;height:1px;background:#3f86bb"></div>
<div class="a" style="left:1588.5px;top:247.7px;font-size:12px;color:#e4edf3;font-weight:normal;transform:translate(-50%,-50%) rotate(-90deg);letter-spacing:-0.598px;">Nyheter version 2020.2</div>
<div class="a" style="left:1588.5px;top:340px;font-size:12px;color:#e4edf3;font-weight:normal;transform:translate(-50%,-50%) rotate(-90deg);letter-spacing:-0.604px;">Chatbot</div>
<div class="a" style="left:1574px;top:365px;width:5px;height:97px;background:#f6b740"></div>
<div class="a" style="left:1588.5px;top:407px;font-size:12px;color:#e4edf3;font-weight:normal;transform:translate(-50%,-50%) rotate(-90deg);letter-spacing:-0.257px;">Notifieringar</div>
<div class="a" style="left:1574px;top:466px;width:24px;height:82px;background:linear-gradient(90deg,#e2e2e2,#ffffff 55%,#f6f6f6)"></div>
<div class="a" style="left:1588.5px;top:508px;font-size:12px;color:#000;font-weight:bold;transform:translate(-50%,-50%) rotate(-90deg);letter-spacing:-1.102px;">Kund - KASSA</div>
<svg style="left:1576px;top:443px" width="20" height="20" viewBox="0 0 20 20"><circle cx="10" cy="10" r="9.5" fill="#c8381c"/><circle cx="10" cy="10" r="8" fill="#dc4a26"/><text x="10" y="14" font-size="10" font-weight="bold" text-anchor="middle" fill="#fff" font-family="Liberation Sans">4</text></svg>
<div class="a" style="left:1605px;top:152px;font-size:11.5px;color:#000;font-weight:normal;letter-spacing:-0.630px;">Kund - KASSA</div>
<svg style="left:1898px;top:148px" width="16" height="18" viewBox="0 0 16 18"><path d="M4 1 H12 V3 H11 V9 L14 12 H9 V17 L8 18 L7 17 V12 H2 L5 9 V3 H4Z" fill="#3a7cb8"/></svg>
<svg style="left:1613px;top:179px" width="17" height="17" viewBox="0 0 17 17"><path d="M3.5 0.5 H11.5 V15.5 H0.5 V3.5Z" fill="#f2f2f2" stroke="#999"/><path d="M0.5 3.5 H3.5 V0.5" fill="#fff" stroke="#999"/><path d="M6 2.5h4M6 4.5h4" stroke="#2d86cc" stroke-width="1.1"/><path d="M15 7 L6.5 15.5" stroke="#2d86cc" stroke-width="2.6"/><path d="M7.3 14.7 L5 17" stroke="#222" stroke-width="1.5"/></svg>
<svg style="left:1637px;top:179px" width="16" height="16" viewBox="0 0 16 16"><path d="M2.5 8 A5.5 5.5 0 0 1 12.5 4.5" fill="none" stroke="#2f86c8" stroke-width="2.6"/><path d="M13.5 8 A5.5 5.5 0 0 1 3.5 11.5" fill="none" stroke="#2f86c8" stroke-width="2.6"/><path d="M10 1 L15 4 L11 7Z M6 15 L1 12 L5 9Z" fill="#2f86c8"/></svg>
<div class="a" style="left:1661px;top:175px;width:1px;height:23px;background:#cfcfcf"></div>
<svg style="left:1669px;top:179px" width="16" height="16" viewBox="0 0 16 16"><circle cx="8" cy="8" r="7.5" fill="#ddd"/><circle cx="8" cy="8" r="6.3" fill="#2f85c7"/><text x="8" y="12" font-size="10" font-weight="bold" text-anchor="middle" fill="#fff" font-family="Liberation Sans">?</text></svg>
<div class="a" style="left:1605px;top:212px;font-size:12px;color:#000;font-weight:normal;transform:scaleX(0.8700);transform-origin:0 0;">Kreditgräns kr:</div>
<div class="a" style="left:1605px;top:229px;width:90px;height:20px;background:#f3f3f3;border:1px solid #969696"></div>
<div class="a" style="right:229px;top:233px;font-size:12px;color:#000;font-weight:normal;text-align:right;transform:scaleX(0.8700);transform-origin:100% 0;">0,00</div>
<div class="a" style="left:1605px;top:255px;font-size:12px;color:#000;font-weight:normal;transform:scaleX(0.8700);transform-origin:0 0;">Fordran kr:</div>
<div class="a" style="left:1605px;top:272px;width:90px;height:20px;background:#f3f3f3;border:1px solid #969696"></div>
<div class="a" style="right:229px;top:276px;font-size:12px;color:#000;font-weight:normal;text-align:right;transform:scaleX(0.8700);transform-origin:100% 0;">3 125,00</div>
<div class="a" style="left:1605px;top:303px;font-size:12px;color:#000;font-weight:normal;transform:scaleX(0.8700);transform-origin:0 0;">Kundanteckningar:</div>
<div class="a" style="left:1605px;top:320px;width:310px;height:277px;background:#f3f3f3;border:1px solid #a3a3a3"></div>
<div class="a" style="left:1897px;top:321px;width:17px;height:275px;background:#ececec"></div>
<svg style="left:1901px;top:327px" width="9" height="5" viewBox="0 0 9 5"><path d="M0.5 4.5 L4.5 0.5 L8.5 4.5Z" fill="#c8c8c8"/></svg>
<svg style="left:1901px;top:585px" width="9" height="5" viewBox="0 0 9 5"><path d="M0.5 0.5 L4.5 4.5 L8.5 0.5Z" fill="#c8c8c8"/></svg>
<div class="a" style="left:0px;top:1021px;width:1920px;height:19px;background:#396e8d"></div>
<div class="a" style="left:0px;top:1021px;width:1920px;height:1px;background:#2b5a78"></div>
<div class="a" style="left:0px;top:1022px;width:1920px;height:1px;background:#3d7ca6"></div>
<div class="a" style="left:1534px;top:1027px;font-size:11px;color:#c4d2dc;font-weight:normal;letter-spacing:0px">Knr: 1997823</div>
<div class="a" style="left:1604px;top:1027px;font-size:11px;color:#c4d2dc;font-weight:normal;">Version 2020.2</div>
<div class="a" style="left:1686px;top:1027px;font-size:11px;color:#fff;font-weight:normal;letter-spacing:0.297px;text-decoration:underline">Ã–vningsbolaget AB</div>
<div class="a" style="left:1794px;top:1027px;font-size:11px;color:#fff;font-weight:normal;text-decoration:underline">21-01-01 - 21-12-31</div>
</body></html>
